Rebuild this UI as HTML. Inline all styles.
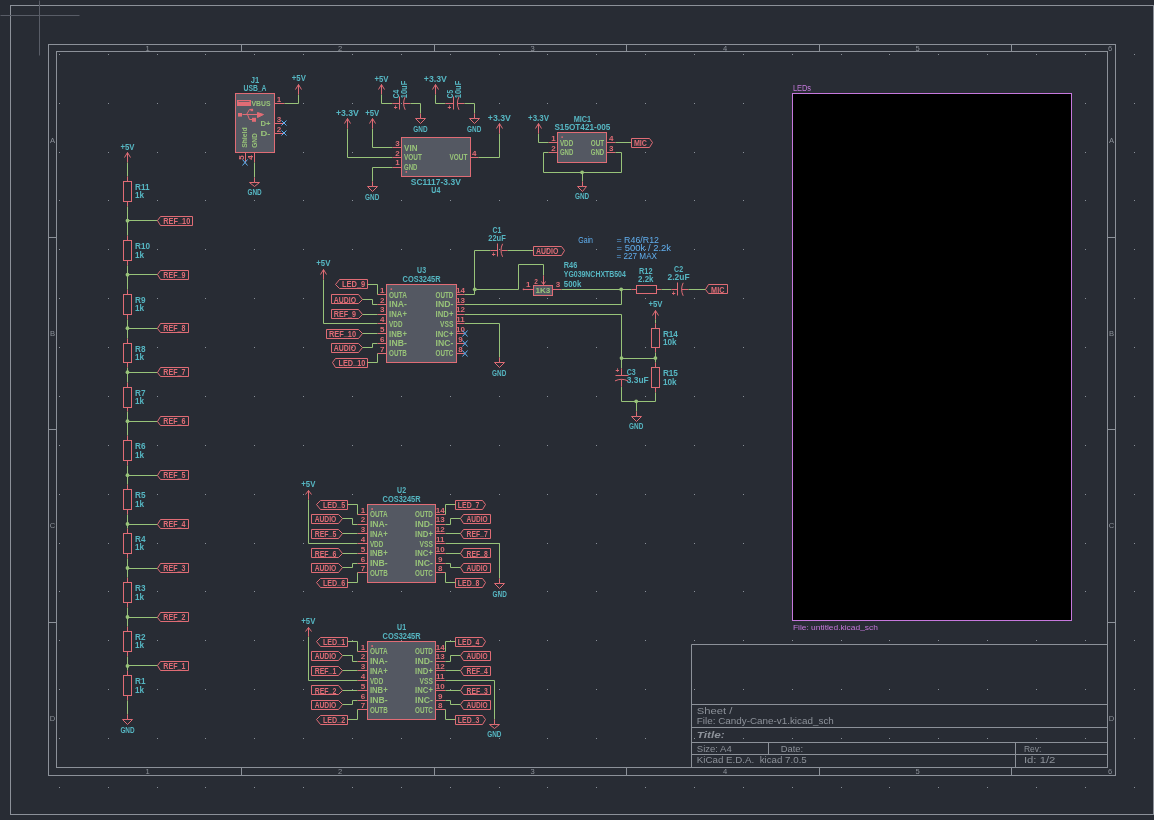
<!DOCTYPE html>
<html><head><meta charset="utf-8"><title>KiCad Schematic</title>
<style>html,body{margin:0;padding:0;background:#282c34;overflow:hidden}</style></head>
<body>
<svg width="1154" height="820" viewBox="0 0 1154 820" style="display:block;will-change:transform">
<rect x="0" y="0" width="1154" height="820" fill="#282c34"/>
<path d="M10 5h1v1h-1zM10 54h1v1h-1zM10 103h1v1h-1zM10 152h1v1h-1zM10 200h1v1h-1zM10 249h1v1h-1zM10 298h1v1h-1zM10 347h1v1h-1zM10 396h1v1h-1zM10 445h1v1h-1zM10 494h1v1h-1zM10 543h1v1h-1zM10 591h1v1h-1zM10 640h1v1h-1zM10 689h1v1h-1zM10 738h1v1h-1zM10 787h1v1h-1zM59 5h1v1h-1zM59 54h1v1h-1zM59 103h1v1h-1zM59 152h1v1h-1zM59 200h1v1h-1zM59 249h1v1h-1zM59 298h1v1h-1zM59 347h1v1h-1zM59 396h1v1h-1zM59 445h1v1h-1zM59 494h1v1h-1zM59 543h1v1h-1zM59 591h1v1h-1zM59 640h1v1h-1zM59 689h1v1h-1zM59 738h1v1h-1zM59 787h1v1h-1zM108 5h1v1h-1zM108 54h1v1h-1zM108 103h1v1h-1zM108 152h1v1h-1zM108 200h1v1h-1zM108 249h1v1h-1zM108 298h1v1h-1zM108 347h1v1h-1zM108 396h1v1h-1zM108 445h1v1h-1zM108 494h1v1h-1zM108 543h1v1h-1zM108 591h1v1h-1zM108 640h1v1h-1zM108 689h1v1h-1zM108 738h1v1h-1zM108 787h1v1h-1zM157 5h1v1h-1zM157 54h1v1h-1zM157 103h1v1h-1zM157 152h1v1h-1zM157 200h1v1h-1zM157 249h1v1h-1zM157 298h1v1h-1zM157 347h1v1h-1zM157 396h1v1h-1zM157 445h1v1h-1zM157 494h1v1h-1zM157 543h1v1h-1zM157 591h1v1h-1zM157 640h1v1h-1zM157 689h1v1h-1zM157 738h1v1h-1zM157 787h1v1h-1zM205 5h1v1h-1zM205 54h1v1h-1zM205 103h1v1h-1zM205 152h1v1h-1zM205 200h1v1h-1zM205 249h1v1h-1zM205 298h1v1h-1zM205 347h1v1h-1zM205 396h1v1h-1zM205 445h1v1h-1zM205 494h1v1h-1zM205 543h1v1h-1zM205 591h1v1h-1zM205 640h1v1h-1zM205 689h1v1h-1zM205 738h1v1h-1zM205 787h1v1h-1zM254 5h1v1h-1zM254 54h1v1h-1zM254 103h1v1h-1zM254 152h1v1h-1zM254 200h1v1h-1zM254 249h1v1h-1zM254 298h1v1h-1zM254 347h1v1h-1zM254 396h1v1h-1zM254 445h1v1h-1zM254 494h1v1h-1zM254 543h1v1h-1zM254 591h1v1h-1zM254 640h1v1h-1zM254 689h1v1h-1zM254 738h1v1h-1zM254 787h1v1h-1zM303 5h1v1h-1zM303 54h1v1h-1zM303 103h1v1h-1zM303 152h1v1h-1zM303 200h1v1h-1zM303 249h1v1h-1zM303 298h1v1h-1zM303 347h1v1h-1zM303 396h1v1h-1zM303 445h1v1h-1zM303 494h1v1h-1zM303 543h1v1h-1zM303 591h1v1h-1zM303 640h1v1h-1zM303 689h1v1h-1zM303 738h1v1h-1zM303 787h1v1h-1zM352 5h1v1h-1zM352 54h1v1h-1zM352 103h1v1h-1zM352 152h1v1h-1zM352 200h1v1h-1zM352 249h1v1h-1zM352 298h1v1h-1zM352 347h1v1h-1zM352 396h1v1h-1zM352 445h1v1h-1zM352 494h1v1h-1zM352 543h1v1h-1zM352 591h1v1h-1zM352 640h1v1h-1zM352 689h1v1h-1zM352 738h1v1h-1zM352 787h1v1h-1zM401 5h1v1h-1zM401 54h1v1h-1zM401 103h1v1h-1zM401 152h1v1h-1zM401 200h1v1h-1zM401 249h1v1h-1zM401 298h1v1h-1zM401 347h1v1h-1zM401 396h1v1h-1zM401 445h1v1h-1zM401 494h1v1h-1zM401 543h1v1h-1zM401 591h1v1h-1zM401 640h1v1h-1zM401 689h1v1h-1zM401 738h1v1h-1zM401 787h1v1h-1zM450 5h1v1h-1zM450 54h1v1h-1zM450 103h1v1h-1zM450 152h1v1h-1zM450 200h1v1h-1zM450 249h1v1h-1zM450 298h1v1h-1zM450 347h1v1h-1zM450 396h1v1h-1zM450 445h1v1h-1zM450 494h1v1h-1zM450 543h1v1h-1zM450 591h1v1h-1zM450 640h1v1h-1zM450 689h1v1h-1zM450 738h1v1h-1zM450 787h1v1h-1zM499 5h1v1h-1zM499 54h1v1h-1zM499 103h1v1h-1zM499 152h1v1h-1zM499 200h1v1h-1zM499 249h1v1h-1zM499 298h1v1h-1zM499 347h1v1h-1zM499 396h1v1h-1zM499 445h1v1h-1zM499 494h1v1h-1zM499 543h1v1h-1zM499 591h1v1h-1zM499 640h1v1h-1zM499 689h1v1h-1zM499 738h1v1h-1zM499 787h1v1h-1zM547 5h1v1h-1zM547 54h1v1h-1zM547 103h1v1h-1zM547 152h1v1h-1zM547 200h1v1h-1zM547 249h1v1h-1zM547 298h1v1h-1zM547 347h1v1h-1zM547 396h1v1h-1zM547 445h1v1h-1zM547 494h1v1h-1zM547 543h1v1h-1zM547 591h1v1h-1zM547 640h1v1h-1zM547 689h1v1h-1zM547 738h1v1h-1zM547 787h1v1h-1zM596 5h1v1h-1zM596 54h1v1h-1zM596 103h1v1h-1zM596 152h1v1h-1zM596 200h1v1h-1zM596 249h1v1h-1zM596 298h1v1h-1zM596 347h1v1h-1zM596 396h1v1h-1zM596 445h1v1h-1zM596 494h1v1h-1zM596 543h1v1h-1zM596 591h1v1h-1zM596 640h1v1h-1zM596 689h1v1h-1zM596 738h1v1h-1zM596 787h1v1h-1zM645 5h1v1h-1zM645 54h1v1h-1zM645 103h1v1h-1zM645 152h1v1h-1zM645 200h1v1h-1zM645 249h1v1h-1zM645 298h1v1h-1zM645 347h1v1h-1zM645 396h1v1h-1zM645 445h1v1h-1zM645 494h1v1h-1zM645 543h1v1h-1zM645 591h1v1h-1zM645 640h1v1h-1zM645 689h1v1h-1zM645 738h1v1h-1zM645 787h1v1h-1zM694 5h1v1h-1zM694 54h1v1h-1zM694 103h1v1h-1zM694 152h1v1h-1zM694 200h1v1h-1zM694 249h1v1h-1zM694 298h1v1h-1zM694 347h1v1h-1zM694 396h1v1h-1zM694 445h1v1h-1zM694 494h1v1h-1zM694 543h1v1h-1zM694 591h1v1h-1zM694 640h1v1h-1zM694 689h1v1h-1zM694 738h1v1h-1zM694 787h1v1h-1zM743 5h1v1h-1zM743 54h1v1h-1zM743 103h1v1h-1zM743 152h1v1h-1zM743 200h1v1h-1zM743 249h1v1h-1zM743 298h1v1h-1zM743 347h1v1h-1zM743 396h1v1h-1zM743 445h1v1h-1zM743 494h1v1h-1zM743 543h1v1h-1zM743 591h1v1h-1zM743 640h1v1h-1zM743 689h1v1h-1zM743 738h1v1h-1zM743 787h1v1h-1zM792 5h1v1h-1zM792 54h1v1h-1zM792 103h1v1h-1zM792 152h1v1h-1zM792 200h1v1h-1zM792 249h1v1h-1zM792 298h1v1h-1zM792 347h1v1h-1zM792 396h1v1h-1zM792 445h1v1h-1zM792 494h1v1h-1zM792 543h1v1h-1zM792 591h1v1h-1zM792 640h1v1h-1zM792 689h1v1h-1zM792 738h1v1h-1zM792 787h1v1h-1zM841 5h1v1h-1zM841 54h1v1h-1zM841 103h1v1h-1zM841 152h1v1h-1zM841 200h1v1h-1zM841 249h1v1h-1zM841 298h1v1h-1zM841 347h1v1h-1zM841 396h1v1h-1zM841 445h1v1h-1zM841 494h1v1h-1zM841 543h1v1h-1zM841 591h1v1h-1zM841 640h1v1h-1zM841 689h1v1h-1zM841 738h1v1h-1zM841 787h1v1h-1zM889 5h1v1h-1zM889 54h1v1h-1zM889 103h1v1h-1zM889 152h1v1h-1zM889 200h1v1h-1zM889 249h1v1h-1zM889 298h1v1h-1zM889 347h1v1h-1zM889 396h1v1h-1zM889 445h1v1h-1zM889 494h1v1h-1zM889 543h1v1h-1zM889 591h1v1h-1zM889 640h1v1h-1zM889 689h1v1h-1zM889 738h1v1h-1zM889 787h1v1h-1zM938 5h1v1h-1zM938 54h1v1h-1zM938 103h1v1h-1zM938 152h1v1h-1zM938 200h1v1h-1zM938 249h1v1h-1zM938 298h1v1h-1zM938 347h1v1h-1zM938 396h1v1h-1zM938 445h1v1h-1zM938 494h1v1h-1zM938 543h1v1h-1zM938 591h1v1h-1zM938 640h1v1h-1zM938 689h1v1h-1zM938 738h1v1h-1zM938 787h1v1h-1zM987 5h1v1h-1zM987 54h1v1h-1zM987 103h1v1h-1zM987 152h1v1h-1zM987 200h1v1h-1zM987 249h1v1h-1zM987 298h1v1h-1zM987 347h1v1h-1zM987 396h1v1h-1zM987 445h1v1h-1zM987 494h1v1h-1zM987 543h1v1h-1zM987 591h1v1h-1zM987 640h1v1h-1zM987 689h1v1h-1zM987 738h1v1h-1zM987 787h1v1h-1zM1036 5h1v1h-1zM1036 54h1v1h-1zM1036 103h1v1h-1zM1036 152h1v1h-1zM1036 200h1v1h-1zM1036 249h1v1h-1zM1036 298h1v1h-1zM1036 347h1v1h-1zM1036 396h1v1h-1zM1036 445h1v1h-1zM1036 494h1v1h-1zM1036 543h1v1h-1zM1036 591h1v1h-1zM1036 640h1v1h-1zM1036 689h1v1h-1zM1036 738h1v1h-1zM1036 787h1v1h-1zM1085 5h1v1h-1zM1085 54h1v1h-1zM1085 103h1v1h-1zM1085 152h1v1h-1zM1085 200h1v1h-1zM1085 249h1v1h-1zM1085 298h1v1h-1zM1085 347h1v1h-1zM1085 396h1v1h-1zM1085 445h1v1h-1zM1085 494h1v1h-1zM1085 543h1v1h-1zM1085 591h1v1h-1zM1085 640h1v1h-1zM1085 689h1v1h-1zM1085 738h1v1h-1zM1085 787h1v1h-1zM1134 5h1v1h-1zM1134 54h1v1h-1zM1134 103h1v1h-1zM1134 152h1v1h-1zM1134 200h1v1h-1zM1134 249h1v1h-1zM1134 298h1v1h-1zM1134 347h1v1h-1zM1134 396h1v1h-1zM1134 445h1v1h-1zM1134 494h1v1h-1zM1134 543h1v1h-1zM1134 591h1v1h-1zM1134 640h1v1h-1zM1134 689h1v1h-1zM1134 738h1v1h-1zM1134 787h1v1h-1z" fill="#8a9099"/>
<rect x="10.50" y="5.50" width="1143.00" height="809.00" stroke="#8c9199" stroke-width="1.0" fill="none"/>
<line x1="39.50" y1="0.50" x2="39.50" y2="55.50" stroke="#595d67" stroke-width="1.0"/>
<line x1="0.50" y1="15.50" x2="79.50" y2="15.50" stroke="#595d67" stroke-width="1.0"/>
<rect x="48.50" y="44.50" width="1067.00" height="731.00" stroke="#8c9199" stroke-width="1.0" fill="none"/>
<rect x="56.50" y="51.50" width="1051.00" height="716.00" stroke="#8c9199" stroke-width="1.0" fill="none"/>
<line x1="241.50" y1="44.50" x2="241.50" y2="51.50" stroke="#8c9199" stroke-width="1.0"/>
<line x1="241.50" y1="767.50" x2="241.50" y2="775.50" stroke="#8c9199" stroke-width="1.0"/>
<line x1="434.50" y1="44.50" x2="434.50" y2="51.50" stroke="#8c9199" stroke-width="1.0"/>
<line x1="434.50" y1="767.50" x2="434.50" y2="775.50" stroke="#8c9199" stroke-width="1.0"/>
<line x1="626.50" y1="44.50" x2="626.50" y2="51.50" stroke="#8c9199" stroke-width="1.0"/>
<line x1="626.50" y1="767.50" x2="626.50" y2="775.50" stroke="#8c9199" stroke-width="1.0"/>
<line x1="819.50" y1="44.50" x2="819.50" y2="51.50" stroke="#8c9199" stroke-width="1.0"/>
<line x1="819.50" y1="767.50" x2="819.50" y2="775.50" stroke="#8c9199" stroke-width="1.0"/>
<line x1="1011.50" y1="44.50" x2="1011.50" y2="51.50" stroke="#8c9199" stroke-width="1.0"/>
<line x1="1011.50" y1="767.50" x2="1011.50" y2="775.50" stroke="#8c9199" stroke-width="1.0"/>
<line x1="48.50" y1="237.50" x2="56.50" y2="237.50" stroke="#8c9199" stroke-width="1.0"/>
<line x1="1107.50" y1="237.50" x2="1115.50" y2="237.50" stroke="#8c9199" stroke-width="1.0"/>
<line x1="48.50" y1="429.50" x2="56.50" y2="429.50" stroke="#8c9199" stroke-width="1.0"/>
<line x1="1107.50" y1="429.50" x2="1115.50" y2="429.50" stroke="#8c9199" stroke-width="1.0"/>
<line x1="48.50" y1="622.50" x2="56.50" y2="622.50" stroke="#8c9199" stroke-width="1.0"/>
<line x1="1107.50" y1="622.50" x2="1115.50" y2="622.50" stroke="#8c9199" stroke-width="1.0"/>
<text x="147.50" y="50.61" fill="#8c9199" font-family="Liberation Sans" font-size="7.6" text-anchor="middle" font-weight="normal" font-style="normal">1</text>
<text x="147.50" y="774.11" fill="#8c9199" font-family="Liberation Sans" font-size="7.6" text-anchor="middle" font-weight="normal" font-style="normal">1</text>
<text x="340.00" y="50.61" fill="#8c9199" font-family="Liberation Sans" font-size="7.6" text-anchor="middle" font-weight="normal" font-style="normal">2</text>
<text x="340.00" y="774.11" fill="#8c9199" font-family="Liberation Sans" font-size="7.6" text-anchor="middle" font-weight="normal" font-style="normal">2</text>
<text x="532.50" y="50.61" fill="#8c9199" font-family="Liberation Sans" font-size="7.6" text-anchor="middle" font-weight="normal" font-style="normal">3</text>
<text x="532.50" y="774.11" fill="#8c9199" font-family="Liberation Sans" font-size="7.6" text-anchor="middle" font-weight="normal" font-style="normal">3</text>
<text x="725.00" y="50.61" fill="#8c9199" font-family="Liberation Sans" font-size="7.6" text-anchor="middle" font-weight="normal" font-style="normal">4</text>
<text x="725.00" y="774.11" fill="#8c9199" font-family="Liberation Sans" font-size="7.6" text-anchor="middle" font-weight="normal" font-style="normal">4</text>
<text x="917.50" y="50.61" fill="#8c9199" font-family="Liberation Sans" font-size="7.6" text-anchor="middle" font-weight="normal" font-style="normal">5</text>
<text x="917.50" y="774.11" fill="#8c9199" font-family="Liberation Sans" font-size="7.6" text-anchor="middle" font-weight="normal" font-style="normal">5</text>
<text x="1110.00" y="50.61" fill="#8c9199" font-family="Liberation Sans" font-size="7.6" text-anchor="middle" font-weight="normal" font-style="normal">6</text>
<text x="1110.00" y="774.11" fill="#8c9199" font-family="Liberation Sans" font-size="7.6" text-anchor="middle" font-weight="normal" font-style="normal">6</text>
<text x="52.50" y="142.61" fill="#8c9199" font-family="Liberation Sans" font-size="7.6" text-anchor="middle" font-weight="normal" font-style="normal">A</text>
<text x="1111.50" y="142.61" fill="#8c9199" font-family="Liberation Sans" font-size="7.6" text-anchor="middle" font-weight="normal" font-style="normal">A</text>
<text x="52.50" y="335.61" fill="#8c9199" font-family="Liberation Sans" font-size="7.6" text-anchor="middle" font-weight="normal" font-style="normal">B</text>
<text x="1111.50" y="335.61" fill="#8c9199" font-family="Liberation Sans" font-size="7.6" text-anchor="middle" font-weight="normal" font-style="normal">B</text>
<text x="52.50" y="528.11" fill="#8c9199" font-family="Liberation Sans" font-size="7.6" text-anchor="middle" font-weight="normal" font-style="normal">C</text>
<text x="1111.50" y="528.11" fill="#8c9199" font-family="Liberation Sans" font-size="7.6" text-anchor="middle" font-weight="normal" font-style="normal">C</text>
<text x="52.50" y="720.61" fill="#8c9199" font-family="Liberation Sans" font-size="7.6" text-anchor="middle" font-weight="normal" font-style="normal">D</text>
<text x="1111.50" y="720.61" fill="#8c9199" font-family="Liberation Sans" font-size="7.6" text-anchor="middle" font-weight="normal" font-style="normal">D</text>
<line x1="691.50" y1="644.50" x2="691.50" y2="767.50" stroke="#8c9199" stroke-width="1.0"/>
<line x1="691.50" y1="644.50" x2="1107.50" y2="644.50" stroke="#8c9199" stroke-width="1.0"/>
<line x1="691.50" y1="704.50" x2="1107.50" y2="704.50" stroke="#8c9199" stroke-width="1.0"/>
<line x1="691.50" y1="727.50" x2="1107.50" y2="727.50" stroke="#8c9199" stroke-width="1.0"/>
<line x1="691.50" y1="742.50" x2="1107.50" y2="742.50" stroke="#8c9199" stroke-width="1.0"/>
<line x1="691.50" y1="754.50" x2="1107.50" y2="754.50" stroke="#8c9199" stroke-width="1.0"/>
<line x1="768.50" y1="742.50" x2="768.50" y2="754.50" stroke="#8c9199" stroke-width="1.0"/>
<line x1="1015.50" y1="742.50" x2="1015.50" y2="767.50" stroke="#8c9199" stroke-width="1.0"/>
<text x="696.80" y="713.53" fill="#8c9199" font-family="Liberation Sans" font-size="9.4" text-anchor="start" font-weight="normal" font-style="normal" textLength="35.60" lengthAdjust="spacingAndGlyphs">Sheet /</text>
<text x="696.80" y="724.03" fill="#8c9199" font-family="Liberation Sans" font-size="9.4" text-anchor="start" font-weight="normal" font-style="normal" textLength="137.00" lengthAdjust="spacingAndGlyphs">File: Candy-Cane-v1.kicad<tspan dy="-0.5">_</tspan><tspan dy="0.5">sch</tspan></text>
<text x="696.80" y="737.73" fill="#8c9199" font-family="Liberation Sans" font-size="9.4" text-anchor="start" font-weight="bold" font-style="italic" textLength="28.00" lengthAdjust="spacingAndGlyphs">Title:</text>
<text x="696.80" y="752.23" fill="#8c9199" font-family="Liberation Sans" font-size="9.4" text-anchor="start" font-weight="normal" font-style="normal" textLength="35.00" lengthAdjust="spacingAndGlyphs">Size: A4</text>
<text x="780.70" y="752.23" fill="#8c9199" font-family="Liberation Sans" font-size="9.4" text-anchor="start" font-weight="normal" font-style="normal" textLength="22.50" lengthAdjust="spacingAndGlyphs">Date:</text>
<text x="696.80" y="763.23" fill="#8c9199" font-family="Liberation Sans" font-size="9.4" text-anchor="start" font-weight="normal" font-style="normal" textLength="110.00" lengthAdjust="spacingAndGlyphs">KiCad E.D.A. &#160;kicad 7.0.5</text>
<text x="1023.90" y="752.23" fill="#8c9199" font-family="Liberation Sans" font-size="9.4" text-anchor="start" font-weight="normal" font-style="normal" textLength="17.50" lengthAdjust="spacingAndGlyphs">Rev:</text>
<text x="1023.90" y="763.23" fill="#8c9199" font-family="Liberation Sans" font-size="9.4" text-anchor="start" font-weight="normal" font-style="normal" textLength="31.50" lengthAdjust="spacingAndGlyphs">Id: 1/2</text>
<rect x="792.50" y="93.50" width="279.00" height="527.00" stroke="#c678dd" stroke-width="1.0" fill="#000000"/>
<text x="792.90" y="90.92" fill="#c678dd" font-family="Liberation Sans" font-size="8.5" text-anchor="start" font-weight="normal" font-style="normal" textLength="18.20" lengthAdjust="spacingAndGlyphs">LEDs</text>
<text x="792.90" y="629.95" fill="#c678dd" font-family="Liberation Sans" font-size="8.0" text-anchor="start" font-weight="normal" font-style="normal" textLength="85.00" lengthAdjust="spacingAndGlyphs">File: untitled.kicad<tspan dy="-0.5">_</tspan><tspan dy="0.5">sch</tspan></text>
<line x1="127.50" y1="162.50" x2="127.50" y2="152.50" stroke="#e06c75" stroke-width="1.0"/>
<polyline points="124.50,157.50 127.50,152.50 130.50,157.50" stroke="#e06c75" stroke-width="1.0" fill="none" stroke-linejoin="miter"/>
<text x="127.50" y="149.64" fill="#56b6c2" font-family="Liberation Sans" font-size="8.2" text-anchor="middle" font-weight="bold" font-style="normal" textLength="14.00" lengthAdjust="spacingAndGlyphs">+5V</text>
<polyline points="127.50,162.50 127.50,176.50" stroke="#98c379" stroke-width="1.0" fill="none" stroke-linejoin="miter"/>
<rect x="123.50" y="181.50" width="8.00" height="20.00" stroke="#e06c75" stroke-width="1.0" fill="none"/>
<line x1="127.50" y1="176.50" x2="127.50" y2="181.50" stroke="#e06c75" stroke-width="1.0"/>
<line x1="127.50" y1="201.50" x2="127.50" y2="206.50" stroke="#e06c75" stroke-width="1.0"/>
<text x="135.00" y="189.92" fill="#56b6c2" font-family="Liberation Sans" font-size="8.2" text-anchor="start" font-weight="bold" font-style="normal">R11</text>
<text x="135.00" y="198.32" fill="#56b6c2" font-family="Liberation Sans" font-size="8.2" text-anchor="start" font-weight="bold" font-style="normal">1k</text>
<rect x="123.50" y="240.50" width="8.00" height="20.00" stroke="#e06c75" stroke-width="1.0" fill="none"/>
<line x1="127.50" y1="235.50" x2="127.50" y2="240.50" stroke="#e06c75" stroke-width="1.0"/>
<line x1="127.50" y1="260.50" x2="127.50" y2="265.50" stroke="#e06c75" stroke-width="1.0"/>
<text x="135.00" y="249.12" fill="#56b6c2" font-family="Liberation Sans" font-size="8.2" text-anchor="start" font-weight="bold" font-style="normal">R10</text>
<text x="135.00" y="257.52" fill="#56b6c2" font-family="Liberation Sans" font-size="8.2" text-anchor="start" font-weight="bold" font-style="normal">1k</text>
<rect x="123.50" y="294.50" width="8.00" height="20.00" stroke="#e06c75" stroke-width="1.0" fill="none"/>
<line x1="127.50" y1="289.50" x2="127.50" y2="294.50" stroke="#e06c75" stroke-width="1.0"/>
<line x1="127.50" y1="314.50" x2="127.50" y2="319.50" stroke="#e06c75" stroke-width="1.0"/>
<text x="135.00" y="303.02" fill="#56b6c2" font-family="Liberation Sans" font-size="8.2" text-anchor="start" font-weight="bold" font-style="normal">R9</text>
<text x="135.00" y="311.42" fill="#56b6c2" font-family="Liberation Sans" font-size="8.2" text-anchor="start" font-weight="bold" font-style="normal">1k</text>
<rect x="123.50" y="343.50" width="8.00" height="19.00" stroke="#e06c75" stroke-width="1.0" fill="none"/>
<line x1="127.50" y1="338.50" x2="127.50" y2="343.50" stroke="#e06c75" stroke-width="1.0"/>
<line x1="127.50" y1="362.50" x2="127.50" y2="367.50" stroke="#e06c75" stroke-width="1.0"/>
<text x="135.00" y="351.72" fill="#56b6c2" font-family="Liberation Sans" font-size="8.2" text-anchor="start" font-weight="bold" font-style="normal">R8</text>
<text x="135.00" y="360.12" fill="#56b6c2" font-family="Liberation Sans" font-size="8.2" text-anchor="start" font-weight="bold" font-style="normal">1k</text>
<rect x="123.50" y="387.50" width="8.00" height="20.00" stroke="#e06c75" stroke-width="1.0" fill="none"/>
<line x1="127.50" y1="382.50" x2="127.50" y2="387.50" stroke="#e06c75" stroke-width="1.0"/>
<line x1="127.50" y1="407.50" x2="127.50" y2="411.50" stroke="#e06c75" stroke-width="1.0"/>
<text x="135.00" y="395.82" fill="#56b6c2" font-family="Liberation Sans" font-size="8.2" text-anchor="start" font-weight="bold" font-style="normal">R7</text>
<text x="135.00" y="404.22" fill="#56b6c2" font-family="Liberation Sans" font-size="8.2" text-anchor="start" font-weight="bold" font-style="normal">1k</text>
<rect x="123.50" y="440.50" width="8.00" height="20.00" stroke="#e06c75" stroke-width="1.0" fill="none"/>
<line x1="127.50" y1="435.50" x2="127.50" y2="440.50" stroke="#e06c75" stroke-width="1.0"/>
<line x1="127.50" y1="460.50" x2="127.50" y2="465.50" stroke="#e06c75" stroke-width="1.0"/>
<text x="135.00" y="449.12" fill="#56b6c2" font-family="Liberation Sans" font-size="8.2" text-anchor="start" font-weight="bold" font-style="normal">R6</text>
<text x="135.00" y="457.52" fill="#56b6c2" font-family="Liberation Sans" font-size="8.2" text-anchor="start" font-weight="bold" font-style="normal">1k</text>
<rect x="123.50" y="489.50" width="8.00" height="20.00" stroke="#e06c75" stroke-width="1.0" fill="none"/>
<line x1="127.50" y1="484.50" x2="127.50" y2="489.50" stroke="#e06c75" stroke-width="1.0"/>
<line x1="127.50" y1="509.50" x2="127.50" y2="514.50" stroke="#e06c75" stroke-width="1.0"/>
<text x="135.00" y="498.22" fill="#56b6c2" font-family="Liberation Sans" font-size="8.2" text-anchor="start" font-weight="bold" font-style="normal">R5</text>
<text x="135.00" y="506.62" fill="#56b6c2" font-family="Liberation Sans" font-size="8.2" text-anchor="start" font-weight="bold" font-style="normal">1k</text>
<rect x="123.50" y="533.50" width="8.00" height="20.00" stroke="#e06c75" stroke-width="1.0" fill="none"/>
<line x1="127.50" y1="528.50" x2="127.50" y2="533.50" stroke="#e06c75" stroke-width="1.0"/>
<line x1="127.50" y1="553.50" x2="127.50" y2="558.50" stroke="#e06c75" stroke-width="1.0"/>
<text x="135.00" y="542.02" fill="#56b6c2" font-family="Liberation Sans" font-size="8.2" text-anchor="start" font-weight="bold" font-style="normal">R4</text>
<text x="135.00" y="550.42" fill="#56b6c2" font-family="Liberation Sans" font-size="8.2" text-anchor="start" font-weight="bold" font-style="normal">1k</text>
<rect x="123.50" y="582.50" width="8.00" height="20.00" stroke="#e06c75" stroke-width="1.0" fill="none"/>
<line x1="127.50" y1="577.50" x2="127.50" y2="582.50" stroke="#e06c75" stroke-width="1.0"/>
<line x1="127.50" y1="602.50" x2="127.50" y2="607.50" stroke="#e06c75" stroke-width="1.0"/>
<text x="135.00" y="591.12" fill="#56b6c2" font-family="Liberation Sans" font-size="8.2" text-anchor="start" font-weight="bold" font-style="normal">R3</text>
<text x="135.00" y="599.52" fill="#56b6c2" font-family="Liberation Sans" font-size="8.2" text-anchor="start" font-weight="bold" font-style="normal">1k</text>
<rect x="123.50" y="631.50" width="8.00" height="20.00" stroke="#e06c75" stroke-width="1.0" fill="none"/>
<line x1="127.50" y1="626.50" x2="127.50" y2="631.50" stroke="#e06c75" stroke-width="1.0"/>
<line x1="127.50" y1="651.50" x2="127.50" y2="656.50" stroke="#e06c75" stroke-width="1.0"/>
<text x="135.00" y="639.92" fill="#56b6c2" font-family="Liberation Sans" font-size="8.2" text-anchor="start" font-weight="bold" font-style="normal">R2</text>
<text x="135.00" y="648.32" fill="#56b6c2" font-family="Liberation Sans" font-size="8.2" text-anchor="start" font-weight="bold" font-style="normal">1k</text>
<rect x="123.50" y="675.50" width="8.00" height="20.00" stroke="#e06c75" stroke-width="1.0" fill="none"/>
<line x1="127.50" y1="670.50" x2="127.50" y2="675.50" stroke="#e06c75" stroke-width="1.0"/>
<line x1="127.50" y1="695.50" x2="127.50" y2="700.50" stroke="#e06c75" stroke-width="1.0"/>
<text x="135.00" y="684.12" fill="#56b6c2" font-family="Liberation Sans" font-size="8.2" text-anchor="start" font-weight="bold" font-style="normal">R1</text>
<text x="135.00" y="692.52" fill="#56b6c2" font-family="Liberation Sans" font-size="8.2" text-anchor="start" font-weight="bold" font-style="normal">1k</text>
<polyline points="127.50,206.50 127.50,235.50" stroke="#98c379" stroke-width="1.0" fill="none" stroke-linejoin="miter"/>
<polyline points="127.50,220.50 157.50,220.50" stroke="#98c379" stroke-width="1.0" fill="none" stroke-linejoin="miter"/>
<circle cx="127.50" cy="220.70" r="1.9" fill="#98c379"/>
<polygon points="157.50,220.50 160.50,216.50 192.50,216.50 192.50,225.50 160.50,225.50 157.50,220.50" stroke="#e06c75" stroke-width="1.0" fill="none" stroke-linejoin="miter"/>
<text x="163.30" y="223.82" fill="#e06c75" font-family="Liberation Sans" font-size="8.2" text-anchor="start" font-weight="bold" font-style="normal" textLength="27.00" lengthAdjust="spacingAndGlyphs">REF<tspan dy="-0.5">_</tspan><tspan dy="0.5">10</tspan></text>
<polyline points="127.50,265.50 127.50,289.50" stroke="#98c379" stroke-width="1.0" fill="none" stroke-linejoin="miter"/>
<polyline points="127.50,274.50 157.50,274.50" stroke="#98c379" stroke-width="1.0" fill="none" stroke-linejoin="miter"/>
<circle cx="127.50" cy="274.70" r="1.9" fill="#98c379"/>
<polygon points="157.50,274.50 160.50,270.50 188.50,270.50 188.50,279.50 160.50,279.50 157.50,274.50" stroke="#e06c75" stroke-width="1.0" fill="none" stroke-linejoin="miter"/>
<text x="163.30" y="277.82" fill="#e06c75" font-family="Liberation Sans" font-size="8.2" text-anchor="start" font-weight="bold" font-style="normal" textLength="22.10" lengthAdjust="spacingAndGlyphs">REF<tspan dy="-0.5">_</tspan><tspan dy="0.5">9</tspan></text>
<polyline points="127.50,319.50 127.50,338.50" stroke="#98c379" stroke-width="1.0" fill="none" stroke-linejoin="miter"/>
<polyline points="127.50,328.50 157.50,328.50" stroke="#98c379" stroke-width="1.0" fill="none" stroke-linejoin="miter"/>
<circle cx="127.50" cy="328.20" r="1.9" fill="#98c379"/>
<polygon points="157.50,328.50 160.50,323.50 188.50,323.50 188.50,332.50 160.50,332.50 157.50,328.50" stroke="#e06c75" stroke-width="1.0" fill="none" stroke-linejoin="miter"/>
<text x="163.30" y="331.32" fill="#e06c75" font-family="Liberation Sans" font-size="8.2" text-anchor="start" font-weight="bold" font-style="normal" textLength="22.10" lengthAdjust="spacingAndGlyphs">REF<tspan dy="-0.5">_</tspan><tspan dy="0.5">8</tspan></text>
<polyline points="127.50,367.50 127.50,382.50" stroke="#98c379" stroke-width="1.0" fill="none" stroke-linejoin="miter"/>
<polyline points="127.50,372.50 157.50,372.50" stroke="#98c379" stroke-width="1.0" fill="none" stroke-linejoin="miter"/>
<circle cx="127.50" cy="372.20" r="1.9" fill="#98c379"/>
<polygon points="157.50,372.50 160.50,367.50 188.50,367.50 188.50,376.50 160.50,376.50 157.50,372.50" stroke="#e06c75" stroke-width="1.0" fill="none" stroke-linejoin="miter"/>
<text x="163.30" y="375.32" fill="#e06c75" font-family="Liberation Sans" font-size="8.2" text-anchor="start" font-weight="bold" font-style="normal" textLength="22.10" lengthAdjust="spacingAndGlyphs">REF<tspan dy="-0.5">_</tspan><tspan dy="0.5">7</tspan></text>
<polyline points="127.50,411.50 127.50,435.50" stroke="#98c379" stroke-width="1.0" fill="none" stroke-linejoin="miter"/>
<polyline points="127.50,421.50 157.50,421.50" stroke="#98c379" stroke-width="1.0" fill="none" stroke-linejoin="miter"/>
<circle cx="127.50" cy="421.20" r="1.9" fill="#98c379"/>
<polygon points="157.50,421.50 160.50,416.50 188.50,416.50 188.50,425.50 160.50,425.50 157.50,421.50" stroke="#e06c75" stroke-width="1.0" fill="none" stroke-linejoin="miter"/>
<text x="163.30" y="424.32" fill="#e06c75" font-family="Liberation Sans" font-size="8.2" text-anchor="start" font-weight="bold" font-style="normal" textLength="22.10" lengthAdjust="spacingAndGlyphs">REF<tspan dy="-0.5">_</tspan><tspan dy="0.5">6</tspan></text>
<polyline points="127.50,465.50 127.50,484.50" stroke="#98c379" stroke-width="1.0" fill="none" stroke-linejoin="miter"/>
<polyline points="127.50,475.50 157.50,475.50" stroke="#98c379" stroke-width="1.0" fill="none" stroke-linejoin="miter"/>
<circle cx="127.50" cy="475.20" r="1.9" fill="#98c379"/>
<polygon points="157.50,475.50 160.50,470.50 188.50,470.50 188.50,479.50 160.50,479.50 157.50,475.50" stroke="#e06c75" stroke-width="1.0" fill="none" stroke-linejoin="miter"/>
<text x="163.30" y="478.32" fill="#e06c75" font-family="Liberation Sans" font-size="8.2" text-anchor="start" font-weight="bold" font-style="normal" textLength="22.10" lengthAdjust="spacingAndGlyphs">REF<tspan dy="-0.5">_</tspan><tspan dy="0.5">5</tspan></text>
<polyline points="127.50,514.50 127.50,528.50" stroke="#98c379" stroke-width="1.0" fill="none" stroke-linejoin="miter"/>
<polyline points="127.50,524.50 157.50,524.50" stroke="#98c379" stroke-width="1.0" fill="none" stroke-linejoin="miter"/>
<circle cx="127.50" cy="524.00" r="1.9" fill="#98c379"/>
<polygon points="157.50,524.50 160.50,519.50 188.50,519.50 188.50,528.50 160.50,528.50 157.50,524.50" stroke="#e06c75" stroke-width="1.0" fill="none" stroke-linejoin="miter"/>
<text x="163.30" y="527.12" fill="#e06c75" font-family="Liberation Sans" font-size="8.2" text-anchor="start" font-weight="bold" font-style="normal" textLength="22.10" lengthAdjust="spacingAndGlyphs">REF<tspan dy="-0.5">_</tspan><tspan dy="0.5">4</tspan></text>
<polyline points="127.50,558.50 127.50,577.50" stroke="#98c379" stroke-width="1.0" fill="none" stroke-linejoin="miter"/>
<polyline points="127.50,568.50 157.50,568.50" stroke="#98c379" stroke-width="1.0" fill="none" stroke-linejoin="miter"/>
<circle cx="127.50" cy="568.00" r="1.9" fill="#98c379"/>
<polygon points="157.50,568.50 160.50,563.50 188.50,563.50 188.50,572.50 160.50,572.50 157.50,568.50" stroke="#e06c75" stroke-width="1.0" fill="none" stroke-linejoin="miter"/>
<text x="163.30" y="571.12" fill="#e06c75" font-family="Liberation Sans" font-size="8.2" text-anchor="start" font-weight="bold" font-style="normal" textLength="22.10" lengthAdjust="spacingAndGlyphs">REF<tspan dy="-0.5">_</tspan><tspan dy="0.5">3</tspan></text>
<polyline points="127.50,607.50 127.50,626.50" stroke="#98c379" stroke-width="1.0" fill="none" stroke-linejoin="miter"/>
<polyline points="127.50,617.50 157.50,617.50" stroke="#98c379" stroke-width="1.0" fill="none" stroke-linejoin="miter"/>
<circle cx="127.50" cy="617.00" r="1.9" fill="#98c379"/>
<polygon points="157.50,617.50 160.50,612.50 188.50,612.50 188.50,621.50 160.50,621.50 157.50,617.50" stroke="#e06c75" stroke-width="1.0" fill="none" stroke-linejoin="miter"/>
<text x="163.30" y="620.12" fill="#e06c75" font-family="Liberation Sans" font-size="8.2" text-anchor="start" font-weight="bold" font-style="normal" textLength="22.10" lengthAdjust="spacingAndGlyphs">REF<tspan dy="-0.5">_</tspan><tspan dy="0.5">2</tspan></text>
<polyline points="127.50,656.50 127.50,670.50" stroke="#98c379" stroke-width="1.0" fill="none" stroke-linejoin="miter"/>
<polyline points="127.50,665.50 157.50,665.50" stroke="#98c379" stroke-width="1.0" fill="none" stroke-linejoin="miter"/>
<circle cx="127.50" cy="665.90" r="1.9" fill="#98c379"/>
<polygon points="157.50,665.50 160.50,661.50 188.50,661.50 188.50,670.50 160.50,670.50 157.50,665.50" stroke="#e06c75" stroke-width="1.0" fill="none" stroke-linejoin="miter"/>
<text x="163.30" y="669.02" fill="#e06c75" font-family="Liberation Sans" font-size="8.2" text-anchor="start" font-weight="bold" font-style="normal" textLength="22.10" lengthAdjust="spacingAndGlyphs">REF<tspan dy="-0.5">_</tspan><tspan dy="0.5">1</tspan></text>
<polyline points="127.50,700.50 127.50,714.50" stroke="#98c379" stroke-width="1.0" fill="none" stroke-linejoin="miter"/>
<line x1="127.50" y1="714.50" x2="127.50" y2="719.50" stroke="#e06c75" stroke-width="1.0"/>
<polyline points="127.50,719.50 132.50,719.50 127.50,724.50 122.50,719.50 127.50,719.50" stroke="#e06c75" stroke-width="1.0" fill="none" stroke-linejoin="miter"/>
<text x="127.50" y="732.52" fill="#56b6c2" font-family="Liberation Sans" font-size="8.2" text-anchor="middle" font-weight="bold" font-style="normal" textLength="14.20" lengthAdjust="spacingAndGlyphs">GND</text>
<rect x="235.50" y="93.50" width="39.00" height="59.00" stroke="#e06c75" stroke-width="1.0" fill="#545862"/>
<rect x="237.50" y="100.50" width="13.00" height="5.00" stroke="#e06c75" stroke-width="1.0" fill="#e06c75"/>
<line x1="238.50" y1="101.50" x2="249.50" y2="101.50" stroke="#545862" stroke-width="0.8"/>
<rect x="238" y="113" width="4" height="3.6" fill="#e06c75"/>
<line x1="242.50" y1="114.50" x2="259.50" y2="114.50" stroke="#e06c75" stroke-width="1.0"/>
<polygon points="257.50,112.50 263.50,114.50 257.50,117.50" stroke="#e06c75" stroke-width="1.0" fill="#e06c75" stroke-linejoin="miter"/>
<polyline points="246.50,114.50 249.50,109.50 252.50,109.50" stroke="#e06c75" stroke-width="1.0" fill="none" stroke-linejoin="miter"/>
<rect x="250.5" y="108.8" width="2.6" height="2.4" fill="#e06c75"/>
<polyline points="247.50,114.50 249.50,119.50 252.50,119.50" stroke="#e06c75" stroke-width="1.0" fill="none" stroke-linejoin="miter"/>
<rect x="252" y="117.8" width="4" height="4" fill="#e06c75"/>
<text x="270.50" y="106.25" fill="#98c379" font-family="Liberation Sans" font-size="8.0" text-anchor="end" font-weight="bold" font-style="normal" textLength="19.00" lengthAdjust="spacingAndGlyphs">VBUS</text>
<text x="270.50" y="125.75" fill="#98c379" font-family="Liberation Sans" font-size="8.0" text-anchor="end" font-weight="bold" font-style="normal" textLength="10.00" lengthAdjust="spacingAndGlyphs">D+</text>
<text x="270.50" y="135.75" fill="#98c379" font-family="Liberation Sans" font-size="8.0" text-anchor="end" font-weight="bold" font-style="normal" textLength="10.00" lengthAdjust="spacingAndGlyphs">D-</text>
<text x="244.70" y="140.35" fill="#98c379" font-family="Liberation Sans" font-size="8.0" text-anchor="middle" font-weight="bold" font-style="normal" textLength="20.50" lengthAdjust="spacingAndGlyphs" transform="rotate(-90 244.70 137.60)">Shield</text>
<text x="254.60" y="143.35" fill="#98c379" font-family="Liberation Sans" font-size="8.0" text-anchor="middle" font-weight="bold" font-style="normal" textLength="14.50" lengthAdjust="spacingAndGlyphs" transform="rotate(-90 254.60 140.60)">GND</text>
<line x1="274.50" y1="103.50" x2="284.50" y2="103.50" stroke="#e06c75" stroke-width="1.0"/>
<text x="279.00" y="102.05" fill="#e06c75" font-family="Liberation Sans" font-size="8.0" text-anchor="middle" font-weight="bold" font-style="normal">1</text>
<polyline points="284.50,103.50 298.50,103.50 298.50,94.50" stroke="#98c379" stroke-width="1.0" fill="none" stroke-linejoin="miter"/>
<line x1="298.50" y1="94.50" x2="298.50" y2="84.50" stroke="#e06c75" stroke-width="1.0"/>
<polyline points="295.50,89.50 298.50,84.50 301.50,89.50" stroke="#e06c75" stroke-width="1.0" fill="none" stroke-linejoin="miter"/>
<text x="298.80" y="81.44" fill="#56b6c2" font-family="Liberation Sans" font-size="8.2" text-anchor="middle" font-weight="bold" font-style="normal" textLength="14.00" lengthAdjust="spacingAndGlyphs">+5V</text>
<line x1="274.50" y1="123.50" x2="284.50" y2="123.50" stroke="#e06c75" stroke-width="1.0"/>
<text x="279.00" y="122.05" fill="#e06c75" font-family="Liberation Sans" font-size="8.0" text-anchor="middle" font-weight="bold" font-style="normal">3</text>
<line x1="281.50" y1="120.50" x2="286.50" y2="125.50" stroke="#61afef" stroke-width="1.0"/>
<line x1="281.50" y1="125.50" x2="286.50" y2="120.50" stroke="#61afef" stroke-width="1.0"/>
<line x1="274.50" y1="133.50" x2="284.50" y2="133.50" stroke="#e06c75" stroke-width="1.0"/>
<text x="279.00" y="132.05" fill="#e06c75" font-family="Liberation Sans" font-size="8.0" text-anchor="middle" font-weight="bold" font-style="normal">2</text>
<line x1="281.50" y1="130.50" x2="286.50" y2="135.50" stroke="#61afef" stroke-width="1.0"/>
<line x1="281.50" y1="135.50" x2="286.50" y2="130.50" stroke="#61afef" stroke-width="1.0"/>
<line x1="245.50" y1="152.50" x2="245.50" y2="162.50" stroke="#e06c75" stroke-width="1.0"/>
<line x1="242.50" y1="159.50" x2="247.50" y2="165.50" stroke="#61afef" stroke-width="1.0"/>
<line x1="242.50" y1="165.50" x2="247.50" y2="159.50" stroke="#61afef" stroke-width="1.0"/>
<text x="241.20" y="160.15" fill="#e06c75" font-family="Liberation Sans" font-size="8.0" text-anchor="middle" font-weight="bold" font-style="normal" transform="rotate(-90 241.20 157.40)">5</text>
<line x1="254.50" y1="152.50" x2="254.50" y2="162.50" stroke="#e06c75" stroke-width="1.0"/>
<text x="250.70" y="160.15" fill="#e06c75" font-family="Liberation Sans" font-size="8.0" text-anchor="middle" font-weight="bold" font-style="normal" transform="rotate(-90 250.70 157.40)">4</text>
<polyline points="254.50,162.50 254.50,177.50" stroke="#98c379" stroke-width="1.0" fill="none" stroke-linejoin="miter"/>
<line x1="254.50" y1="177.50" x2="254.50" y2="182.50" stroke="#e06c75" stroke-width="1.0"/>
<polyline points="254.50,182.50 259.50,182.50 254.50,186.50 249.50,182.50 254.50,182.50" stroke="#e06c75" stroke-width="1.0" fill="none" stroke-linejoin="miter"/>
<text x="254.60" y="195.12" fill="#56b6c2" font-family="Liberation Sans" font-size="8.2" text-anchor="middle" font-weight="bold" font-style="normal" textLength="14.20" lengthAdjust="spacingAndGlyphs">GND</text>
<text x="255.00" y="83.32" fill="#56b6c2" font-family="Liberation Sans" font-size="8.2" text-anchor="middle" font-weight="bold" font-style="normal" textLength="8.50" lengthAdjust="spacingAndGlyphs">J1</text>
<text x="255.00" y="91.02" fill="#56b6c2" font-family="Liberation Sans" font-size="8.2" text-anchor="middle" font-weight="bold" font-style="normal" textLength="23.00" lengthAdjust="spacingAndGlyphs">USB<tspan dy="-0.5">_</tspan><tspan dy="0.5">A</tspan></text>
<rect x="401.50" y="137.50" width="69.00" height="39.00" stroke="#e06c75" stroke-width="1.0" fill="#545862"/>
<line x1="392.50" y1="147.50" x2="401.50" y2="147.50" stroke="#e06c75" stroke-width="1.0"/>
<text x="404.10" y="150.53" fill="#98c379" font-family="Liberation Sans" font-size="8.8" text-anchor="start" font-weight="bold" font-style="normal" textLength="13.35" lengthAdjust="spacingAndGlyphs">VIN</text>
<text x="397.40" y="145.85" fill="#e06c75" font-family="Liberation Sans" font-size="8.0" text-anchor="middle" font-weight="bold" font-style="normal">3</text>
<line x1="392.50" y1="157.50" x2="401.50" y2="157.50" stroke="#e06c75" stroke-width="1.0"/>
<text x="404.10" y="160.33" fill="#98c379" font-family="Liberation Sans" font-size="8.8" text-anchor="start" font-weight="bold" font-style="normal" textLength="17.80" lengthAdjust="spacingAndGlyphs">VOUT</text>
<text x="397.40" y="155.65" fill="#e06c75" font-family="Liberation Sans" font-size="8.0" text-anchor="middle" font-weight="bold" font-style="normal">2</text>
<line x1="392.50" y1="167.50" x2="401.50" y2="167.50" stroke="#e06c75" stroke-width="1.0"/>
<text x="404.10" y="170.13" fill="#98c379" font-family="Liberation Sans" font-size="8.8" text-anchor="start" font-weight="bold" font-style="normal" textLength="13.35" lengthAdjust="spacingAndGlyphs">GND</text>
<text x="397.40" y="165.45" fill="#e06c75" font-family="Liberation Sans" font-size="8.0" text-anchor="middle" font-weight="bold" font-style="normal">1</text>
<line x1="470.50" y1="157.50" x2="478.50" y2="157.50" stroke="#e06c75" stroke-width="1.0"/>
<text x="467.40" y="160.33" fill="#98c379" font-family="Liberation Sans" font-size="8.8" text-anchor="end" font-weight="bold" font-style="normal" textLength="17.80" lengthAdjust="spacingAndGlyphs">VOUT</text>
<text x="474.25" y="155.65" fill="#e06c75" font-family="Liberation Sans" font-size="8.0" text-anchor="middle" font-weight="bold" font-style="normal">4</text>
<circle cx="406.30" cy="171.90" r="0.9" fill="#e06c75"/>
<polyline points="392.50,147.50 372.50,147.50 372.50,128.50" stroke="#98c379" stroke-width="1.0" fill="none" stroke-linejoin="miter"/>
<line x1="372.50" y1="128.50" x2="372.50" y2="118.50" stroke="#e06c75" stroke-width="1.0"/>
<polyline points="369.50,123.50 372.50,118.50 375.50,123.50" stroke="#e06c75" stroke-width="1.0" fill="none" stroke-linejoin="miter"/>
<text x="372.20" y="116.04" fill="#56b6c2" font-family="Liberation Sans" font-size="8.2" text-anchor="middle" font-weight="bold" font-style="normal" textLength="14.00" lengthAdjust="spacingAndGlyphs">+5V</text>
<polyline points="392.50,157.50 347.50,157.50 347.50,128.50" stroke="#98c379" stroke-width="1.0" fill="none" stroke-linejoin="miter"/>
<line x1="347.50" y1="128.50" x2="347.50" y2="118.50" stroke="#e06c75" stroke-width="1.0"/>
<polyline points="344.50,123.50 347.50,118.50 350.50,123.50" stroke="#e06c75" stroke-width="1.0" fill="none" stroke-linejoin="miter"/>
<text x="347.40" y="116.04" fill="#56b6c2" font-family="Liberation Sans" font-size="8.2" text-anchor="middle" font-weight="bold" font-style="normal" textLength="23.00" lengthAdjust="spacingAndGlyphs">+3.3V</text>
<polyline points="392.50,167.50 372.50,167.50 372.50,181.50" stroke="#98c379" stroke-width="1.0" fill="none" stroke-linejoin="miter"/>
<line x1="372.50" y1="181.50" x2="372.50" y2="186.50" stroke="#e06c75" stroke-width="1.0"/>
<polyline points="372.50,186.50 377.50,186.50 372.50,191.50 367.50,186.50 372.50,186.50" stroke="#e06c75" stroke-width="1.0" fill="none" stroke-linejoin="miter"/>
<text x="372.20" y="199.52" fill="#56b6c2" font-family="Liberation Sans" font-size="8.2" text-anchor="middle" font-weight="bold" font-style="normal" textLength="14.20" lengthAdjust="spacingAndGlyphs">GND</text>
<polyline points="478.50,157.50 499.50,157.50 499.50,133.50" stroke="#98c379" stroke-width="1.0" fill="none" stroke-linejoin="miter"/>
<line x1="499.50" y1="133.50" x2="499.50" y2="123.50" stroke="#e06c75" stroke-width="1.0"/>
<polyline points="496.50,128.50 499.50,123.50 502.50,128.50" stroke="#e06c75" stroke-width="1.0" fill="none" stroke-linejoin="miter"/>
<text x="499.30" y="121.14" fill="#56b6c2" font-family="Liberation Sans" font-size="8.2" text-anchor="middle" font-weight="bold" font-style="normal" textLength="23.00" lengthAdjust="spacingAndGlyphs">+3.3V</text>
<text x="435.80" y="185.12" fill="#56b6c2" font-family="Liberation Sans" font-size="8.2" text-anchor="middle" font-weight="bold" font-style="normal" textLength="50.00" lengthAdjust="spacingAndGlyphs">SC1117-3.3V</text>
<text x="435.80" y="193.42" fill="#56b6c2" font-family="Liberation Sans" font-size="8.2" text-anchor="middle" font-weight="bold" font-style="normal" textLength="9.00" lengthAdjust="spacingAndGlyphs">U4</text>
<line x1="381.50" y1="94.50" x2="381.50" y2="84.50" stroke="#e06c75" stroke-width="1.0"/>
<polyline points="378.50,89.50 381.50,84.50 384.50,89.50" stroke="#e06c75" stroke-width="1.0" fill="none" stroke-linejoin="miter"/>
<text x="381.50" y="81.54" fill="#56b6c2" font-family="Liberation Sans" font-size="8.2" text-anchor="middle" font-weight="bold" font-style="normal" textLength="14.00" lengthAdjust="spacingAndGlyphs">+5V</text>
<polyline points="381.50,94.50 381.50,103.50 392.50,103.50" stroke="#98c379" stroke-width="1.0" fill="none" stroke-linejoin="miter"/>
<line x1="392.50" y1="103.50" x2="399.50" y2="103.50" stroke="#e06c75" stroke-width="1.0"/>
<line x1="399.50" y1="96.50" x2="399.50" y2="109.50" stroke="#e06c75" stroke-width="1.0"/>
<path d="M405.20,96.80 Q402.00,103.30 405.20,109.80" stroke="#e06c75" stroke-width="1.0" fill="none"/>
<line x1="403.50" y1="103.50" x2="410.50" y2="103.50" stroke="#e06c75" stroke-width="1.0"/>
<text x="395.60" y="109.74" fill="#e06c75" font-family="Liberation Sans" font-size="6.5" text-anchor="middle" font-weight="bold" font-style="normal">+</text>
<polyline points="410.50,103.50 420.50,103.50 420.50,113.50" stroke="#98c379" stroke-width="1.0" fill="none" stroke-linejoin="miter"/>
<line x1="420.50" y1="113.50" x2="420.50" y2="118.50" stroke="#e06c75" stroke-width="1.0"/>
<polyline points="420.50,118.50 425.50,118.50 420.50,123.50 415.50,118.50 420.50,118.50" stroke="#e06c75" stroke-width="1.0" fill="none" stroke-linejoin="miter"/>
<text x="420.40" y="131.82" fill="#56b6c2" font-family="Liberation Sans" font-size="8.2" text-anchor="middle" font-weight="bold" font-style="normal" textLength="14.20" lengthAdjust="spacingAndGlyphs">GND</text>
<text x="396.00" y="96.82" fill="#56b6c2" font-family="Liberation Sans" font-size="8.2" text-anchor="middle" font-weight="bold" font-style="normal" textLength="8.50" lengthAdjust="spacingAndGlyphs" transform="rotate(-90 396.00 94.00)">C4</text>
<text x="404.30" y="92.32" fill="#56b6c2" font-family="Liberation Sans" font-size="8.2" text-anchor="middle" font-weight="bold" font-style="normal" textLength="17.50" lengthAdjust="spacingAndGlyphs" transform="rotate(-90 404.30 89.50)">10uF</text>
<line x1="435.50" y1="94.50" x2="435.50" y2="84.50" stroke="#e06c75" stroke-width="1.0"/>
<polyline points="432.50,89.50 435.50,84.50 438.50,89.50" stroke="#e06c75" stroke-width="1.0" fill="none" stroke-linejoin="miter"/>
<text x="435.30" y="81.54" fill="#56b6c2" font-family="Liberation Sans" font-size="8.2" text-anchor="middle" font-weight="bold" font-style="normal" textLength="23.00" lengthAdjust="spacingAndGlyphs">+3.3V</text>
<polyline points="435.50,94.50 435.50,103.50 445.50,103.50" stroke="#98c379" stroke-width="1.0" fill="none" stroke-linejoin="miter"/>
<line x1="445.50" y1="103.50" x2="453.50" y2="103.50" stroke="#e06c75" stroke-width="1.0"/>
<line x1="453.50" y1="96.50" x2="453.50" y2="109.50" stroke="#e06c75" stroke-width="1.0"/>
<path d="M459.00,96.80 Q455.80,103.30 459.00,109.80" stroke="#e06c75" stroke-width="1.0" fill="none"/>
<line x1="457.50" y1="103.50" x2="464.50" y2="103.50" stroke="#e06c75" stroke-width="1.0"/>
<text x="449.40" y="109.74" fill="#e06c75" font-family="Liberation Sans" font-size="6.5" text-anchor="middle" font-weight="bold" font-style="normal">+</text>
<polyline points="464.50,103.50 474.50,103.50 474.50,113.50" stroke="#98c379" stroke-width="1.0" fill="none" stroke-linejoin="miter"/>
<line x1="474.50" y1="113.50" x2="474.50" y2="118.50" stroke="#e06c75" stroke-width="1.0"/>
<polyline points="474.50,118.50 479.50,118.50 474.50,123.50 469.50,118.50 474.50,118.50" stroke="#e06c75" stroke-width="1.0" fill="none" stroke-linejoin="miter"/>
<text x="474.20" y="131.82" fill="#56b6c2" font-family="Liberation Sans" font-size="8.2" text-anchor="middle" font-weight="bold" font-style="normal" textLength="14.20" lengthAdjust="spacingAndGlyphs">GND</text>
<text x="449.80" y="96.82" fill="#56b6c2" font-family="Liberation Sans" font-size="8.2" text-anchor="middle" font-weight="bold" font-style="normal" textLength="8.50" lengthAdjust="spacingAndGlyphs" transform="rotate(-90 449.80 94.00)">C5</text>
<text x="458.10" y="92.32" fill="#56b6c2" font-family="Liberation Sans" font-size="8.2" text-anchor="middle" font-weight="bold" font-style="normal" textLength="17.50" lengthAdjust="spacingAndGlyphs" transform="rotate(-90 458.10 89.50)">10uF</text>
<rect x="557.50" y="132.50" width="49.00" height="30.00" stroke="#e06c75" stroke-width="1.0" fill="#545862"/>
<line x1="548.50" y1="142.50" x2="557.50" y2="142.50" stroke="#e06c75" stroke-width="1.0"/>
<text x="559.90" y="145.73" fill="#98c379" font-family="Liberation Sans" font-size="8.8" text-anchor="start" font-weight="bold" font-style="normal" textLength="13.35" lengthAdjust="spacingAndGlyphs">VDD</text>
<text x="553.60" y="141.05" fill="#e06c75" font-family="Liberation Sans" font-size="8.0" text-anchor="middle" font-weight="bold" font-style="normal">1</text>
<line x1="548.50" y1="152.50" x2="557.50" y2="152.50" stroke="#e06c75" stroke-width="1.0"/>
<text x="559.90" y="155.43" fill="#98c379" font-family="Liberation Sans" font-size="8.8" text-anchor="start" font-weight="bold" font-style="normal" textLength="13.35" lengthAdjust="spacingAndGlyphs">GND</text>
<text x="553.60" y="150.75" fill="#e06c75" font-family="Liberation Sans" font-size="8.0" text-anchor="middle" font-weight="bold" font-style="normal">2</text>
<line x1="606.50" y1="142.50" x2="615.50" y2="142.50" stroke="#e06c75" stroke-width="1.0"/>
<text x="604.10" y="145.73" fill="#98c379" font-family="Liberation Sans" font-size="8.8" text-anchor="end" font-weight="bold" font-style="normal" textLength="13.35" lengthAdjust="spacingAndGlyphs">OUT</text>
<text x="611.30" y="141.05" fill="#e06c75" font-family="Liberation Sans" font-size="8.0" text-anchor="middle" font-weight="bold" font-style="normal">4</text>
<line x1="606.50" y1="152.50" x2="615.50" y2="152.50" stroke="#e06c75" stroke-width="1.0"/>
<text x="604.10" y="155.43" fill="#98c379" font-family="Liberation Sans" font-size="8.8" text-anchor="end" font-weight="bold" font-style="normal" textLength="13.35" lengthAdjust="spacingAndGlyphs">GND</text>
<text x="611.30" y="150.75" fill="#e06c75" font-family="Liberation Sans" font-size="8.0" text-anchor="middle" font-weight="bold" font-style="normal">3</text>
<circle cx="562.10" cy="137.10" r="0.9" fill="#e06c75"/>
<polyline points="548.50,142.50 538.50,142.50 538.50,133.50" stroke="#98c379" stroke-width="1.0" fill="none" stroke-linejoin="miter"/>
<line x1="538.50" y1="133.50" x2="538.50" y2="123.50" stroke="#e06c75" stroke-width="1.0"/>
<polyline points="535.50,128.50 538.50,123.50 541.50,128.50" stroke="#e06c75" stroke-width="1.0" fill="none" stroke-linejoin="miter"/>
<text x="538.50" y="121.04" fill="#56b6c2" font-family="Liberation Sans" font-size="8.2" text-anchor="middle" font-weight="bold" font-style="normal" textLength="21.00" lengthAdjust="spacingAndGlyphs">+3.3V</text>
<polyline points="548.50,152.50 543.50,152.50 543.50,172.50 621.50,172.50 621.50,152.50 615.50,152.50" stroke="#98c379" stroke-width="1.0" fill="none" stroke-linejoin="miter"/>
<circle cx="582.10" cy="172.30" r="1.9" fill="#98c379"/>
<polyline points="582.50,172.50 582.50,181.50" stroke="#98c379" stroke-width="1.0" fill="none" stroke-linejoin="miter"/>
<line x1="582.50" y1="181.50" x2="582.50" y2="186.50" stroke="#e06c75" stroke-width="1.0"/>
<polyline points="582.50,186.50 586.50,186.50 582.50,191.50 577.50,186.50 582.50,186.50" stroke="#e06c75" stroke-width="1.0" fill="none" stroke-linejoin="miter"/>
<text x="582.10" y="199.22" fill="#56b6c2" font-family="Liberation Sans" font-size="8.2" text-anchor="middle" font-weight="bold" font-style="normal" textLength="14.20" lengthAdjust="spacingAndGlyphs">GND</text>
<polyline points="615.50,142.50 631.50,142.50" stroke="#98c379" stroke-width="1.0" fill="none" stroke-linejoin="miter"/>
<polygon points="652.50,142.50 649.50,138.50 631.50,138.50 631.50,147.50 649.50,147.50 652.50,142.50" stroke="#e06c75" stroke-width="1.0" fill="none" stroke-linejoin="miter"/>
<text x="633.90" y="145.62" fill="#e06c75" font-family="Liberation Sans" font-size="8.2" text-anchor="start" font-weight="bold" font-style="normal" textLength="13.00" lengthAdjust="spacingAndGlyphs">MIC</text>
<text x="582.40" y="122.12" fill="#56b6c2" font-family="Liberation Sans" font-size="8.2" text-anchor="middle" font-weight="bold" font-style="normal" textLength="17.50" lengthAdjust="spacingAndGlyphs">MIC1</text>
<text x="582.40" y="129.92" fill="#56b6c2" font-family="Liberation Sans" font-size="8.2" text-anchor="middle" font-weight="bold" font-style="normal" textLength="56.00" lengthAdjust="spacingAndGlyphs">S15OT421-005</text>
<rect x="386.50" y="284.50" width="70.00" height="78.00" stroke="#e06c75" stroke-width="1.0" fill="#545862"/>
<line x1="377.50" y1="294.50" x2="386.50" y2="294.50" stroke="#e06c75" stroke-width="1.0"/>
<text x="389.10" y="297.53" fill="#98c379" font-family="Liberation Sans" font-size="8.8" text-anchor="start" font-weight="bold" font-style="normal" textLength="17.80" lengthAdjust="spacingAndGlyphs">OUTA</text>
<text x="382.35" y="292.85" fill="#e06c75" font-family="Liberation Sans" font-size="8.0" text-anchor="middle" font-weight="bold" font-style="normal">1</text>
<line x1="377.50" y1="304.50" x2="386.50" y2="304.50" stroke="#e06c75" stroke-width="1.0"/>
<text x="389.10" y="307.31" fill="#98c379" font-family="Liberation Sans" font-size="8.8" text-anchor="start" font-weight="bold" font-style="normal" textLength="17.80" lengthAdjust="spacingAndGlyphs">INA-</text>
<text x="382.35" y="302.63" fill="#e06c75" font-family="Liberation Sans" font-size="8.0" text-anchor="middle" font-weight="bold" font-style="normal">2</text>
<line x1="377.50" y1="314.50" x2="386.50" y2="314.50" stroke="#e06c75" stroke-width="1.0"/>
<text x="389.10" y="317.09" fill="#98c379" font-family="Liberation Sans" font-size="8.8" text-anchor="start" font-weight="bold" font-style="normal" textLength="17.80" lengthAdjust="spacingAndGlyphs">INA+</text>
<text x="382.35" y="312.41" fill="#e06c75" font-family="Liberation Sans" font-size="8.0" text-anchor="middle" font-weight="bold" font-style="normal">3</text>
<line x1="377.50" y1="323.50" x2="386.50" y2="323.50" stroke="#e06c75" stroke-width="1.0"/>
<text x="389.10" y="326.87" fill="#98c379" font-family="Liberation Sans" font-size="8.8" text-anchor="start" font-weight="bold" font-style="normal" textLength="13.35" lengthAdjust="spacingAndGlyphs">VDD</text>
<text x="382.35" y="322.19" fill="#e06c75" font-family="Liberation Sans" font-size="8.0" text-anchor="middle" font-weight="bold" font-style="normal">4</text>
<line x1="377.50" y1="333.50" x2="386.50" y2="333.50" stroke="#e06c75" stroke-width="1.0"/>
<text x="389.10" y="336.65" fill="#98c379" font-family="Liberation Sans" font-size="8.8" text-anchor="start" font-weight="bold" font-style="normal" textLength="17.80" lengthAdjust="spacingAndGlyphs">INB+</text>
<text x="382.35" y="331.97" fill="#e06c75" font-family="Liberation Sans" font-size="8.0" text-anchor="middle" font-weight="bold" font-style="normal">5</text>
<line x1="377.50" y1="343.50" x2="386.50" y2="343.50" stroke="#e06c75" stroke-width="1.0"/>
<text x="389.10" y="346.43" fill="#98c379" font-family="Liberation Sans" font-size="8.8" text-anchor="start" font-weight="bold" font-style="normal" textLength="17.80" lengthAdjust="spacingAndGlyphs">INB-</text>
<text x="382.35" y="341.75" fill="#e06c75" font-family="Liberation Sans" font-size="8.0" text-anchor="middle" font-weight="bold" font-style="normal">6</text>
<line x1="377.50" y1="353.50" x2="386.50" y2="353.50" stroke="#e06c75" stroke-width="1.0"/>
<text x="389.10" y="356.21" fill="#98c379" font-family="Liberation Sans" font-size="8.8" text-anchor="start" font-weight="bold" font-style="normal" textLength="17.80" lengthAdjust="spacingAndGlyphs">OUTB</text>
<text x="382.35" y="351.53" fill="#e06c75" font-family="Liberation Sans" font-size="8.0" text-anchor="middle" font-weight="bold" font-style="normal">7</text>
<line x1="456.50" y1="294.50" x2="464.50" y2="294.50" stroke="#e06c75" stroke-width="1.0"/>
<text x="453.40" y="297.53" fill="#98c379" font-family="Liberation Sans" font-size="8.8" text-anchor="end" font-weight="bold" font-style="normal" textLength="17.80" lengthAdjust="spacingAndGlyphs">OUTD</text>
<text x="460.40" y="292.85" fill="#e06c75" font-family="Liberation Sans" font-size="8.0" text-anchor="middle" font-weight="bold" font-style="normal">14</text>
<line x1="456.50" y1="304.50" x2="464.50" y2="304.50" stroke="#e06c75" stroke-width="1.0"/>
<text x="453.40" y="307.31" fill="#98c379" font-family="Liberation Sans" font-size="8.8" text-anchor="end" font-weight="bold" font-style="normal" textLength="17.80" lengthAdjust="spacingAndGlyphs">IND-</text>
<text x="460.40" y="302.63" fill="#e06c75" font-family="Liberation Sans" font-size="8.0" text-anchor="middle" font-weight="bold" font-style="normal">13</text>
<line x1="456.50" y1="314.50" x2="464.50" y2="314.50" stroke="#e06c75" stroke-width="1.0"/>
<text x="453.40" y="317.09" fill="#98c379" font-family="Liberation Sans" font-size="8.8" text-anchor="end" font-weight="bold" font-style="normal" textLength="17.80" lengthAdjust="spacingAndGlyphs">IND+</text>
<text x="460.40" y="312.41" fill="#e06c75" font-family="Liberation Sans" font-size="8.0" text-anchor="middle" font-weight="bold" font-style="normal">12</text>
<line x1="456.50" y1="323.50" x2="464.50" y2="323.50" stroke="#e06c75" stroke-width="1.0"/>
<text x="453.40" y="326.87" fill="#98c379" font-family="Liberation Sans" font-size="8.8" text-anchor="end" font-weight="bold" font-style="normal" textLength="13.35" lengthAdjust="spacingAndGlyphs">VSS</text>
<text x="460.40" y="322.19" fill="#e06c75" font-family="Liberation Sans" font-size="8.0" text-anchor="middle" font-weight="bold" font-style="normal">11</text>
<line x1="456.50" y1="333.50" x2="464.50" y2="333.50" stroke="#e06c75" stroke-width="1.0"/>
<text x="453.40" y="336.65" fill="#98c379" font-family="Liberation Sans" font-size="8.8" text-anchor="end" font-weight="bold" font-style="normal" textLength="17.80" lengthAdjust="spacingAndGlyphs">INC+</text>
<text x="460.40" y="331.97" fill="#e06c75" font-family="Liberation Sans" font-size="8.0" text-anchor="middle" font-weight="bold" font-style="normal">10</text>
<line x1="456.50" y1="343.50" x2="464.50" y2="343.50" stroke="#e06c75" stroke-width="1.0"/>
<text x="453.40" y="346.43" fill="#98c379" font-family="Liberation Sans" font-size="8.8" text-anchor="end" font-weight="bold" font-style="normal" textLength="17.80" lengthAdjust="spacingAndGlyphs">INC-</text>
<text x="460.40" y="341.75" fill="#e06c75" font-family="Liberation Sans" font-size="8.0" text-anchor="middle" font-weight="bold" font-style="normal">9</text>
<line x1="456.50" y1="353.50" x2="464.50" y2="353.50" stroke="#e06c75" stroke-width="1.0"/>
<text x="453.40" y="356.21" fill="#98c379" font-family="Liberation Sans" font-size="8.8" text-anchor="end" font-weight="bold" font-style="normal" textLength="17.80" lengthAdjust="spacingAndGlyphs">OUTC</text>
<text x="460.40" y="351.53" fill="#e06c75" font-family="Liberation Sans" font-size="8.0" text-anchor="middle" font-weight="bold" font-style="normal">8</text>
<circle cx="391.30" cy="289.10" r="0.9" fill="#e06c75"/>
<polygon points="335.50,284.50 339.50,279.50 367.50,279.50 367.50,288.50 339.50,288.50 335.50,284.50" stroke="#e06c75" stroke-width="1.0" fill="none" stroke-linejoin="miter"/>
<text x="341.90" y="287.42" fill="#e06c75" font-family="Liberation Sans" font-size="8.2" text-anchor="start" font-weight="bold" font-style="normal" textLength="23.40" lengthAdjust="spacingAndGlyphs">LED<tspan dy="-0.5">_</tspan><tspan dy="0.5">9</tspan></text>
<polyline points="367.50,284.50 377.50,284.50 377.50,294.50" stroke="#98c379" stroke-width="1.0" fill="none" stroke-linejoin="miter"/>
<polygon points="362.50,299.50 358.50,294.50 331.50,294.50 331.50,303.50 358.50,303.50 362.50,299.50" stroke="#e06c75" stroke-width="1.0" fill="none" stroke-linejoin="miter"/>
<text x="333.80" y="302.52" fill="#e06c75" font-family="Liberation Sans" font-size="8.2" text-anchor="start" font-weight="bold" font-style="normal" textLength="22.30" lengthAdjust="spacingAndGlyphs">AUDIO</text>
<polyline points="362.50,299.50 372.50,299.50 372.50,304.50 377.50,304.50" stroke="#98c379" stroke-width="1.0" fill="none" stroke-linejoin="miter"/>
<polygon points="362.50,314.50 358.50,309.50 331.50,309.50 331.50,318.50 358.50,318.50 362.50,314.50" stroke="#e06c75" stroke-width="1.0" fill="none" stroke-linejoin="miter"/>
<text x="333.80" y="317.18" fill="#e06c75" font-family="Liberation Sans" font-size="8.2" text-anchor="start" font-weight="bold" font-style="normal" textLength="22.30" lengthAdjust="spacingAndGlyphs">REF<tspan dy="-0.5">_</tspan><tspan dy="0.5">9</tspan></text>
<polyline points="362.50,314.50 377.50,314.50" stroke="#98c379" stroke-width="1.0" fill="none" stroke-linejoin="miter"/>
<polyline points="377.50,323.50 323.50,323.50 323.50,279.50" stroke="#98c379" stroke-width="1.0" fill="none" stroke-linejoin="miter"/>
<line x1="323.50" y1="279.50" x2="323.50" y2="269.50" stroke="#e06c75" stroke-width="1.0"/>
<polyline points="320.50,274.50 323.50,269.50 326.50,274.50" stroke="#e06c75" stroke-width="1.0" fill="none" stroke-linejoin="miter"/>
<text x="323.30" y="266.44" fill="#56b6c2" font-family="Liberation Sans" font-size="8.2" text-anchor="middle" font-weight="bold" font-style="normal" textLength="14.00" lengthAdjust="spacingAndGlyphs">+5V</text>
<polygon points="362.50,333.50 358.50,329.50 326.50,329.50 326.50,338.50 358.50,338.50 362.50,333.50" stroke="#e06c75" stroke-width="1.0" fill="none" stroke-linejoin="miter"/>
<text x="328.90" y="336.74" fill="#e06c75" font-family="Liberation Sans" font-size="8.2" text-anchor="start" font-weight="bold" font-style="normal" textLength="27.20" lengthAdjust="spacingAndGlyphs">REF<tspan dy="-0.5">_</tspan><tspan dy="0.5">10</tspan></text>
<polyline points="362.50,333.50 377.50,333.50" stroke="#98c379" stroke-width="1.0" fill="none" stroke-linejoin="miter"/>
<polygon points="362.50,347.50 358.50,343.50 331.50,343.50 331.50,352.50 358.50,352.50 362.50,347.50" stroke="#e06c75" stroke-width="1.0" fill="none" stroke-linejoin="miter"/>
<text x="333.80" y="351.02" fill="#e06c75" font-family="Liberation Sans" font-size="8.2" text-anchor="start" font-weight="bold" font-style="normal" textLength="22.30" lengthAdjust="spacingAndGlyphs">AUDIO</text>
<polyline points="362.50,347.50 372.50,347.50 372.50,343.50 377.50,343.50" stroke="#98c379" stroke-width="1.0" fill="none" stroke-linejoin="miter"/>
<polygon points="332.50,362.50 335.50,358.50 367.50,358.50 367.50,367.50 335.50,367.50 332.50,362.50" stroke="#e06c75" stroke-width="1.0" fill="none" stroke-linejoin="miter"/>
<text x="338.50" y="365.82" fill="#e06c75" font-family="Liberation Sans" font-size="8.2" text-anchor="start" font-weight="bold" font-style="normal" textLength="26.80" lengthAdjust="spacingAndGlyphs">LED<tspan dy="-0.5">_</tspan><tspan dy="0.5">10</tspan></text>
<polyline points="367.50,362.50 377.50,362.50 377.50,353.50" stroke="#98c379" stroke-width="1.0" fill="none" stroke-linejoin="miter"/>
<line x1="462.50" y1="330.50" x2="467.50" y2="336.50" stroke="#61afef" stroke-width="1.0"/>
<line x1="462.50" y1="336.50" x2="467.50" y2="330.50" stroke="#61afef" stroke-width="1.0"/>
<line x1="462.50" y1="340.50" x2="467.50" y2="346.50" stroke="#61afef" stroke-width="1.0"/>
<line x1="462.50" y1="346.50" x2="467.50" y2="340.50" stroke="#61afef" stroke-width="1.0"/>
<line x1="462.50" y1="350.50" x2="467.50" y2="356.50" stroke="#61afef" stroke-width="1.0"/>
<line x1="462.50" y1="356.50" x2="467.50" y2="350.50" stroke="#61afef" stroke-width="1.0"/>
<polyline points="464.50,294.50 474.50,294.50 474.50,289.50" stroke="#98c379" stroke-width="1.0" fill="none" stroke-linejoin="miter"/>
<circle cx="474.80" cy="289.30" r="1.9" fill="#98c379"/>
<polyline points="474.50,289.50 474.50,250.50 490.50,250.50" stroke="#98c379" stroke-width="1.0" fill="none" stroke-linejoin="miter"/>
<polyline points="474.50,289.50 518.50,289.50 518.50,264.50 543.50,264.50 543.50,275.50" stroke="#98c379" stroke-width="1.0" fill="none" stroke-linejoin="miter"/>
<polyline points="464.50,304.50 621.50,304.50 621.50,289.50" stroke="#98c379" stroke-width="1.0" fill="none" stroke-linejoin="miter"/>
<polyline points="464.50,314.50 621.50,314.50 621.50,358.50" stroke="#98c379" stroke-width="1.0" fill="none" stroke-linejoin="miter"/>
<polyline points="464.50,323.50 499.50,323.50 499.50,357.50" stroke="#98c379" stroke-width="1.0" fill="none" stroke-linejoin="miter"/>
<line x1="499.50" y1="357.50" x2="499.50" y2="362.50" stroke="#e06c75" stroke-width="1.0"/>
<polyline points="499.50,362.50 504.50,362.50 499.50,367.50 494.50,362.50 499.50,362.50" stroke="#e06c75" stroke-width="1.0" fill="none" stroke-linejoin="miter"/>
<text x="499.20" y="375.72" fill="#56b6c2" font-family="Liberation Sans" font-size="8.2" text-anchor="middle" font-weight="bold" font-style="normal" textLength="14.20" lengthAdjust="spacingAndGlyphs">GND</text>
<text x="421.60" y="273.42" fill="#56b6c2" font-family="Liberation Sans" font-size="8.2" text-anchor="middle" font-weight="bold" font-style="normal" textLength="9.00" lengthAdjust="spacingAndGlyphs">U3</text>
<text x="421.60" y="281.62" fill="#56b6c2" font-family="Liberation Sans" font-size="8.2" text-anchor="middle" font-weight="bold" font-style="normal" textLength="38.00" lengthAdjust="spacingAndGlyphs">COS3245R</text>
<line x1="490.50" y1="250.50" x2="497.50" y2="250.50" stroke="#e06c75" stroke-width="1.0"/>
<line x1="497.50" y1="243.50" x2="497.50" y2="256.50" stroke="#e06c75" stroke-width="1.0"/>
<path d="M502.60,243.80 Q499.40,250.30 502.60,256.80" stroke="#e06c75" stroke-width="1.0" fill="none"/>
<line x1="501.50" y1="250.50" x2="507.50" y2="250.50" stroke="#e06c75" stroke-width="1.0"/>
<text x="493.60" y="256.74" fill="#e06c75" font-family="Liberation Sans" font-size="6.5" text-anchor="middle" font-weight="bold" font-style="normal">+</text>
<polyline points="507.50,250.50 533.50,250.50" stroke="#98c379" stroke-width="1.0" fill="none" stroke-linejoin="miter"/>
<polygon points="564.50,250.50 561.50,246.50 533.50,246.50 533.50,255.50 561.50,255.50 564.50,250.50" stroke="#e06c75" stroke-width="1.0" fill="none" stroke-linejoin="miter"/>
<text x="536.10" y="253.62" fill="#e06c75" font-family="Liberation Sans" font-size="8.2" text-anchor="start" font-weight="bold" font-style="normal" textLength="22.30" lengthAdjust="spacingAndGlyphs">AUDIO</text>
<text x="497.00" y="233.02" fill="#56b6c2" font-family="Liberation Sans" font-size="8.2" text-anchor="middle" font-weight="bold" font-style="normal" textLength="9.00" lengthAdjust="spacingAndGlyphs">C1</text>
<text x="497.00" y="241.02" fill="#56b6c2" font-family="Liberation Sans" font-size="8.2" text-anchor="middle" font-weight="bold" font-style="normal" textLength="17.50" lengthAdjust="spacingAndGlyphs">22uF</text>
<rect x="533.50" y="285.50" width="19.00" height="10.00" stroke="#e06c75" stroke-width="1.0" fill="#545862"/>
<line x1="523.50" y1="289.50" x2="533.50" y2="289.50" stroke="#e06c75" stroke-width="1.0"/>
<circle cx="523.5" cy="289.3" r="0.9" fill="#e06c75"/>
<line x1="552.50" y1="289.50" x2="561.50" y2="289.50" stroke="#e06c75" stroke-width="1.0"/>
<line x1="543.50" y1="275.50" x2="543.50" y2="284.50" stroke="#e06c75" stroke-width="1.0"/>
<polyline points="541.50,281.50 543.50,284.50 545.50,281.50" stroke="#e06c75" stroke-width="1.0" fill="none" stroke-linejoin="miter"/>
<text x="536.00" y="283.74" fill="#e06c75" font-family="Liberation Sans" font-size="6.5" text-anchor="middle" font-weight="bold" font-style="normal">2</text>
<text x="528.30" y="287.35" fill="#e06c75" font-family="Liberation Sans" font-size="8.0" text-anchor="middle" font-weight="bold" font-style="normal">1</text>
<text x="558.00" y="287.35" fill="#e06c75" font-family="Liberation Sans" font-size="8.0" text-anchor="middle" font-weight="bold" font-style="normal">3</text>
<text x="542.90" y="292.95" fill="#98c379" font-family="Liberation Sans" font-size="8.0" text-anchor="middle" font-weight="bold" font-style="normal" textLength="15.00" lengthAdjust="spacingAndGlyphs">1K3</text>
<text x="563.80" y="267.92" fill="#56b6c2" font-family="Liberation Sans" font-size="8.2" text-anchor="start" font-weight="bold" font-style="normal" textLength="13.50" lengthAdjust="spacingAndGlyphs">R46</text>
<text x="563.80" y="277.32" fill="#56b6c2" font-family="Liberation Sans" font-size="8.2" text-anchor="start" font-weight="bold" font-style="normal" textLength="62.00" lengthAdjust="spacingAndGlyphs">YG039NCHXTB504</text>
<text x="563.80" y="287.32" fill="#56b6c2" font-family="Liberation Sans" font-size="8.2" text-anchor="start" font-weight="bold" font-style="normal" textLength="17.50" lengthAdjust="spacingAndGlyphs">500k</text>
<polyline points="561.50,289.50 631.50,289.50" stroke="#98c379" stroke-width="1.0" fill="none" stroke-linejoin="miter"/>
<circle cx="621.20" cy="289.30" r="1.9" fill="#98c379"/>
<rect x="636.50" y="285.50" width="20.00" height="8.00" stroke="#e06c75" stroke-width="1.0" fill="none"/>
<line x1="631.50" y1="289.50" x2="636.50" y2="289.50" stroke="#e06c75" stroke-width="1.0"/>
<line x1="656.50" y1="289.50" x2="661.50" y2="289.50" stroke="#e06c75" stroke-width="1.0"/>
<polyline points="661.50,289.50 671.50,289.50" stroke="#98c379" stroke-width="1.0" fill="none" stroke-linejoin="miter"/>
<text x="645.80" y="273.82" fill="#56b6c2" font-family="Liberation Sans" font-size="8.2" text-anchor="middle" font-weight="bold" font-style="normal" textLength="13.50" lengthAdjust="spacingAndGlyphs">R12</text>
<text x="645.80" y="281.52" fill="#56b6c2" font-family="Liberation Sans" font-size="8.2" text-anchor="middle" font-weight="bold" font-style="normal" textLength="15.50" lengthAdjust="spacingAndGlyphs">2.2k</text>
<line x1="671.50" y1="289.50" x2="677.50" y2="289.50" stroke="#e06c75" stroke-width="1.0"/>
<line x1="677.50" y1="282.50" x2="677.50" y2="295.50" stroke="#e06c75" stroke-width="1.0"/>
<path d="M683.20,282.80 Q680.00,289.30 683.20,295.80" stroke="#e06c75" stroke-width="1.0" fill="none"/>
<line x1="681.50" y1="289.50" x2="688.50" y2="289.50" stroke="#e06c75" stroke-width="1.0"/>
<text x="673.60" y="295.74" fill="#e06c75" font-family="Liberation Sans" font-size="6.5" text-anchor="middle" font-weight="bold" font-style="normal">+</text>
<polyline points="688.50,289.50 705.50,289.50" stroke="#98c379" stroke-width="1.0" fill="none" stroke-linejoin="miter"/>
<polygon points="705.50,289.50 708.50,284.50 727.50,284.50 727.50,293.50 708.50,293.50 705.50,289.50" stroke="#e06c75" stroke-width="1.0" fill="none" stroke-linejoin="miter"/>
<text x="711.10" y="292.52" fill="#e06c75" font-family="Liberation Sans" font-size="8.2" text-anchor="start" font-weight="bold" font-style="normal" textLength="13.30" lengthAdjust="spacingAndGlyphs">MIC</text>
<text x="678.60" y="272.12" fill="#56b6c2" font-family="Liberation Sans" font-size="8.2" text-anchor="middle" font-weight="bold" font-style="normal" textLength="9.00" lengthAdjust="spacingAndGlyphs">C2</text>
<text x="678.60" y="279.82" fill="#56b6c2" font-family="Liberation Sans" font-size="8.2" text-anchor="middle" font-weight="bold" font-style="normal" textLength="22.00" lengthAdjust="spacingAndGlyphs">2.2uF</text>
<text x="578.20" y="242.72" fill="#61afef" font-family="Liberation Sans" font-size="8.2" text-anchor="start" font-weight="normal" font-style="normal" textLength="14.80" lengthAdjust="spacingAndGlyphs">Gain</text>
<text x="616.50" y="242.72" fill="#61afef" font-family="Liberation Sans" font-size="8.2" text-anchor="start" font-weight="normal" font-style="normal" textLength="42.50" lengthAdjust="spacingAndGlyphs">= R46/R12</text>
<text x="616.50" y="251.02" fill="#61afef" font-family="Liberation Sans" font-size="8.2" text-anchor="start" font-weight="normal" font-style="normal" textLength="54.60" lengthAdjust="spacingAndGlyphs">= 500k / 2.2k</text>
<text x="616.50" y="259.12" fill="#61afef" font-family="Liberation Sans" font-size="8.2" text-anchor="start" font-weight="normal" font-style="normal" textLength="40.50" lengthAdjust="spacingAndGlyphs">= 227 MAX</text>
<line x1="655.50" y1="319.50" x2="655.50" y2="310.50" stroke="#e06c75" stroke-width="1.0"/>
<polyline points="652.50,315.50 655.50,310.50 658.50,315.50" stroke="#e06c75" stroke-width="1.0" fill="none" stroke-linejoin="miter"/>
<text x="655.40" y="307.34" fill="#56b6c2" font-family="Liberation Sans" font-size="8.2" text-anchor="middle" font-weight="bold" font-style="normal" textLength="14.00" lengthAdjust="spacingAndGlyphs">+5V</text>
<polyline points="655.50,319.50 655.50,323.50" stroke="#98c379" stroke-width="1.0" fill="none" stroke-linejoin="miter"/>
<rect x="651.50" y="328.50" width="8.00" height="19.00" stroke="#e06c75" stroke-width="1.0" fill="none"/>
<line x1="655.50" y1="323.50" x2="655.50" y2="328.50" stroke="#e06c75" stroke-width="1.0"/>
<line x1="655.50" y1="347.50" x2="655.50" y2="352.50" stroke="#e06c75" stroke-width="1.0"/>
<text x="662.90" y="336.62" fill="#56b6c2" font-family="Liberation Sans" font-size="8.2" text-anchor="start" font-weight="bold" font-style="normal">R14</text>
<text x="662.90" y="345.02" fill="#56b6c2" font-family="Liberation Sans" font-size="8.2" text-anchor="start" font-weight="bold" font-style="normal">10k</text>
<rect x="651.50" y="367.50" width="8.00" height="20.00" stroke="#e06c75" stroke-width="1.0" fill="none"/>
<line x1="655.50" y1="362.50" x2="655.50" y2="367.50" stroke="#e06c75" stroke-width="1.0"/>
<line x1="655.50" y1="387.50" x2="655.50" y2="392.50" stroke="#e06c75" stroke-width="1.0"/>
<text x="662.90" y="376.22" fill="#56b6c2" font-family="Liberation Sans" font-size="8.2" text-anchor="start" font-weight="bold" font-style="normal">R15</text>
<text x="662.90" y="384.62" fill="#56b6c2" font-family="Liberation Sans" font-size="8.2" text-anchor="start" font-weight="bold" font-style="normal">10k</text>
<polyline points="655.50,352.50 655.50,362.50" stroke="#98c379" stroke-width="1.0" fill="none" stroke-linejoin="miter"/>
<polyline points="621.50,358.50 655.50,358.50" stroke="#98c379" stroke-width="1.0" fill="none" stroke-linejoin="miter"/>
<circle cx="621.50" cy="358.10" r="1.9" fill="#98c379"/>
<circle cx="655.40" cy="358.10" r="1.9" fill="#98c379"/>
<polyline points="655.50,392.50 655.50,401.50 621.50,401.50 621.50,386.50" stroke="#98c379" stroke-width="1.0" fill="none" stroke-linejoin="miter"/>
<polyline points="621.50,358.50 621.50,368.50" stroke="#98c379" stroke-width="1.0" fill="none" stroke-linejoin="miter"/>
<line x1="621.50" y1="368.50" x2="621.50" y2="375.50" stroke="#e06c75" stroke-width="1.0"/>
<line x1="615.50" y1="375.50" x2="628.50" y2="375.50" stroke="#e06c75" stroke-width="1.0"/>
<path d="M615.00,380.90 Q621.50,377.70 628.00,380.90" stroke="#e06c75" stroke-width="1.0" fill="none"/>
<line x1="621.50" y1="379.50" x2="621.50" y2="386.50" stroke="#e06c75" stroke-width="1.0"/>
<text x="617.30" y="373.44" fill="#e06c75" font-family="Liberation Sans" font-size="6.5" text-anchor="middle" font-weight="bold" font-style="normal">+</text>
<circle cx="636.20" cy="401.30" r="1.9" fill="#98c379"/>
<polyline points="636.50,401.50 636.50,411.50" stroke="#98c379" stroke-width="1.0" fill="none" stroke-linejoin="miter"/>
<line x1="636.50" y1="411.50" x2="636.50" y2="416.50" stroke="#e06c75" stroke-width="1.0"/>
<polyline points="636.50,416.50 641.50,416.50 636.50,421.50 631.50,416.50 636.50,416.50" stroke="#e06c75" stroke-width="1.0" fill="none" stroke-linejoin="miter"/>
<text x="636.20" y="429.32" fill="#56b6c2" font-family="Liberation Sans" font-size="8.2" text-anchor="middle" font-weight="bold" font-style="normal" textLength="14.20" lengthAdjust="spacingAndGlyphs">GND</text>
<text x="626.70" y="375.22" fill="#56b6c2" font-family="Liberation Sans" font-size="8.2" text-anchor="start" font-weight="bold" font-style="normal" textLength="9.00" lengthAdjust="spacingAndGlyphs">C3</text>
<text x="626.70" y="383.02" fill="#56b6c2" font-family="Liberation Sans" font-size="8.2" text-anchor="start" font-weight="bold" font-style="normal" textLength="22.00" lengthAdjust="spacingAndGlyphs">3.3uF</text>
<rect x="367.50" y="504.50" width="68.00" height="78.00" stroke="#e06c75" stroke-width="1.0" fill="#545862"/>
<line x1="357.50" y1="514.50" x2="367.50" y2="514.50" stroke="#e06c75" stroke-width="1.0"/>
<text x="369.90" y="517.33" fill="#98c379" font-family="Liberation Sans" font-size="8.8" text-anchor="start" font-weight="bold" font-style="normal" textLength="17.80" lengthAdjust="spacingAndGlyphs">OUTA</text>
<text x="363.05" y="512.65" fill="#e06c75" font-family="Liberation Sans" font-size="8.0" text-anchor="middle" font-weight="bold" font-style="normal">1</text>
<line x1="357.50" y1="524.50" x2="367.50" y2="524.50" stroke="#e06c75" stroke-width="1.0"/>
<text x="369.90" y="527.11" fill="#98c379" font-family="Liberation Sans" font-size="8.8" text-anchor="start" font-weight="bold" font-style="normal" textLength="17.80" lengthAdjust="spacingAndGlyphs">INA-</text>
<text x="363.05" y="522.43" fill="#e06c75" font-family="Liberation Sans" font-size="8.0" text-anchor="middle" font-weight="bold" font-style="normal">2</text>
<line x1="357.50" y1="533.50" x2="367.50" y2="533.50" stroke="#e06c75" stroke-width="1.0"/>
<text x="369.90" y="536.89" fill="#98c379" font-family="Liberation Sans" font-size="8.8" text-anchor="start" font-weight="bold" font-style="normal" textLength="17.80" lengthAdjust="spacingAndGlyphs">INA+</text>
<text x="363.05" y="532.21" fill="#e06c75" font-family="Liberation Sans" font-size="8.0" text-anchor="middle" font-weight="bold" font-style="normal">3</text>
<line x1="357.50" y1="543.50" x2="367.50" y2="543.50" stroke="#e06c75" stroke-width="1.0"/>
<text x="369.90" y="546.67" fill="#98c379" font-family="Liberation Sans" font-size="8.8" text-anchor="start" font-weight="bold" font-style="normal" textLength="13.35" lengthAdjust="spacingAndGlyphs">VDD</text>
<text x="363.05" y="541.99" fill="#e06c75" font-family="Liberation Sans" font-size="8.0" text-anchor="middle" font-weight="bold" font-style="normal">4</text>
<line x1="357.50" y1="553.50" x2="367.50" y2="553.50" stroke="#e06c75" stroke-width="1.0"/>
<text x="369.90" y="556.45" fill="#98c379" font-family="Liberation Sans" font-size="8.8" text-anchor="start" font-weight="bold" font-style="normal" textLength="17.80" lengthAdjust="spacingAndGlyphs">INB+</text>
<text x="363.05" y="551.77" fill="#e06c75" font-family="Liberation Sans" font-size="8.0" text-anchor="middle" font-weight="bold" font-style="normal">5</text>
<line x1="357.50" y1="563.50" x2="367.50" y2="563.50" stroke="#e06c75" stroke-width="1.0"/>
<text x="369.90" y="566.23" fill="#98c379" font-family="Liberation Sans" font-size="8.8" text-anchor="start" font-weight="bold" font-style="normal" textLength="17.80" lengthAdjust="spacingAndGlyphs">INB-</text>
<text x="363.05" y="561.55" fill="#e06c75" font-family="Liberation Sans" font-size="8.0" text-anchor="middle" font-weight="bold" font-style="normal">6</text>
<line x1="357.50" y1="572.50" x2="367.50" y2="572.50" stroke="#e06c75" stroke-width="1.0"/>
<text x="369.90" y="576.01" fill="#98c379" font-family="Liberation Sans" font-size="8.8" text-anchor="start" font-weight="bold" font-style="normal" textLength="17.80" lengthAdjust="spacingAndGlyphs">OUTB</text>
<text x="363.05" y="571.33" fill="#e06c75" font-family="Liberation Sans" font-size="8.0" text-anchor="middle" font-weight="bold" font-style="normal">7</text>
<line x1="435.50" y1="514.50" x2="445.50" y2="514.50" stroke="#e06c75" stroke-width="1.0"/>
<text x="432.90" y="517.33" fill="#98c379" font-family="Liberation Sans" font-size="8.8" text-anchor="end" font-weight="bold" font-style="normal" textLength="17.80" lengthAdjust="spacingAndGlyphs">OUTD</text>
<text x="440.30" y="512.65" fill="#e06c75" font-family="Liberation Sans" font-size="8.0" text-anchor="middle" font-weight="bold" font-style="normal">14</text>
<line x1="435.50" y1="524.50" x2="445.50" y2="524.50" stroke="#e06c75" stroke-width="1.0"/>
<text x="432.90" y="527.11" fill="#98c379" font-family="Liberation Sans" font-size="8.8" text-anchor="end" font-weight="bold" font-style="normal" textLength="17.80" lengthAdjust="spacingAndGlyphs">IND-</text>
<text x="440.30" y="522.43" fill="#e06c75" font-family="Liberation Sans" font-size="8.0" text-anchor="middle" font-weight="bold" font-style="normal">13</text>
<line x1="435.50" y1="533.50" x2="445.50" y2="533.50" stroke="#e06c75" stroke-width="1.0"/>
<text x="432.90" y="536.89" fill="#98c379" font-family="Liberation Sans" font-size="8.8" text-anchor="end" font-weight="bold" font-style="normal" textLength="17.80" lengthAdjust="spacingAndGlyphs">IND+</text>
<text x="440.30" y="532.21" fill="#e06c75" font-family="Liberation Sans" font-size="8.0" text-anchor="middle" font-weight="bold" font-style="normal">12</text>
<line x1="435.50" y1="543.50" x2="445.50" y2="543.50" stroke="#e06c75" stroke-width="1.0"/>
<text x="432.90" y="546.67" fill="#98c379" font-family="Liberation Sans" font-size="8.8" text-anchor="end" font-weight="bold" font-style="normal" textLength="13.35" lengthAdjust="spacingAndGlyphs">VSS</text>
<text x="440.30" y="541.99" fill="#e06c75" font-family="Liberation Sans" font-size="8.0" text-anchor="middle" font-weight="bold" font-style="normal">11</text>
<line x1="435.50" y1="553.50" x2="445.50" y2="553.50" stroke="#e06c75" stroke-width="1.0"/>
<text x="432.90" y="556.45" fill="#98c379" font-family="Liberation Sans" font-size="8.8" text-anchor="end" font-weight="bold" font-style="normal" textLength="17.80" lengthAdjust="spacingAndGlyphs">INC+</text>
<text x="440.30" y="551.77" fill="#e06c75" font-family="Liberation Sans" font-size="8.0" text-anchor="middle" font-weight="bold" font-style="normal">10</text>
<line x1="435.50" y1="563.50" x2="445.50" y2="563.50" stroke="#e06c75" stroke-width="1.0"/>
<text x="432.90" y="566.23" fill="#98c379" font-family="Liberation Sans" font-size="8.8" text-anchor="end" font-weight="bold" font-style="normal" textLength="17.80" lengthAdjust="spacingAndGlyphs">INC-</text>
<text x="440.30" y="561.55" fill="#e06c75" font-family="Liberation Sans" font-size="8.0" text-anchor="middle" font-weight="bold" font-style="normal">9</text>
<line x1="435.50" y1="572.50" x2="445.50" y2="572.50" stroke="#e06c75" stroke-width="1.0"/>
<text x="432.90" y="576.01" fill="#98c379" font-family="Liberation Sans" font-size="8.8" text-anchor="end" font-weight="bold" font-style="normal" textLength="17.80" lengthAdjust="spacingAndGlyphs">OUTC</text>
<text x="440.30" y="571.33" fill="#e06c75" font-family="Liberation Sans" font-size="8.0" text-anchor="middle" font-weight="bold" font-style="normal">8</text>
<circle cx="372.10" cy="509.00" r="0.9" fill="#e06c75"/>
<polygon points="316.50,504.50 320.50,500.50 347.50,500.50 347.50,509.50 320.50,509.50 316.50,504.50" stroke="#e06c75" stroke-width="1.0" fill="none" stroke-linejoin="miter"/>
<text x="323.00" y="507.82" fill="#e06c75" font-family="Liberation Sans" font-size="8.2" text-anchor="start" font-weight="bold" font-style="normal" textLength="22.20" lengthAdjust="spacingAndGlyphs">LED<tspan dy="-0.5">_</tspan><tspan dy="0.5">5</tspan></text>
<polyline points="347.50,504.50 357.50,504.50 357.50,514.50" stroke="#98c379" stroke-width="1.0" fill="none" stroke-linejoin="miter"/>
<polygon points="342.50,518.50 338.50,514.50 311.50,514.50 311.50,523.50 338.50,523.50 342.50,518.50" stroke="#e06c75" stroke-width="1.0" fill="none" stroke-linejoin="miter"/>
<text x="314.70" y="522.02" fill="#e06c75" font-family="Liberation Sans" font-size="8.2" text-anchor="start" font-weight="bold" font-style="normal" textLength="21.60" lengthAdjust="spacingAndGlyphs">AUDIO</text>
<polyline points="342.50,518.50 352.50,518.50 352.50,524.50 357.50,524.50" stroke="#98c379" stroke-width="1.0" fill="none" stroke-linejoin="miter"/>
<polygon points="342.50,533.50 338.50,529.50 311.50,529.50 311.50,538.50 338.50,538.50 342.50,533.50" stroke="#e06c75" stroke-width="1.0" fill="none" stroke-linejoin="miter"/>
<text x="314.70" y="536.98" fill="#e06c75" font-family="Liberation Sans" font-size="8.2" text-anchor="start" font-weight="bold" font-style="normal" textLength="21.60" lengthAdjust="spacingAndGlyphs">REF<tspan dy="-0.5">_</tspan><tspan dy="0.5">5</tspan></text>
<polyline points="342.50,533.50 357.50,533.50" stroke="#98c379" stroke-width="1.0" fill="none" stroke-linejoin="miter"/>
<polyline points="357.50,543.50 308.50,543.50 308.50,499.50" stroke="#98c379" stroke-width="1.0" fill="none" stroke-linejoin="miter"/>
<line x1="308.50" y1="499.50" x2="308.50" y2="490.50" stroke="#e06c75" stroke-width="1.0"/>
<polyline points="305.50,494.50 308.50,490.50 311.50,494.50" stroke="#e06c75" stroke-width="1.0" fill="none" stroke-linejoin="miter"/>
<text x="308.30" y="487.24" fill="#56b6c2" font-family="Liberation Sans" font-size="8.2" text-anchor="middle" font-weight="bold" font-style="normal" textLength="14.00" lengthAdjust="spacingAndGlyphs">+5V</text>
<polygon points="342.50,553.50 338.50,548.50 311.50,548.50 311.50,557.50 338.50,557.50 342.50,553.50" stroke="#e06c75" stroke-width="1.0" fill="none" stroke-linejoin="miter"/>
<text x="314.70" y="556.54" fill="#e06c75" font-family="Liberation Sans" font-size="8.2" text-anchor="start" font-weight="bold" font-style="normal" textLength="21.60" lengthAdjust="spacingAndGlyphs">REF<tspan dy="-0.5">_</tspan><tspan dy="0.5">6</tspan></text>
<polyline points="342.50,553.50 357.50,553.50" stroke="#98c379" stroke-width="1.0" fill="none" stroke-linejoin="miter"/>
<polygon points="342.50,567.50 338.50,563.50 311.50,563.50 311.50,572.50 338.50,572.50 342.50,567.50" stroke="#e06c75" stroke-width="1.0" fill="none" stroke-linejoin="miter"/>
<text x="314.70" y="570.82" fill="#e06c75" font-family="Liberation Sans" font-size="8.2" text-anchor="start" font-weight="bold" font-style="normal" textLength="21.60" lengthAdjust="spacingAndGlyphs">AUDIO</text>
<polyline points="342.50,567.50 352.50,567.50 352.50,563.50 357.50,563.50" stroke="#98c379" stroke-width="1.0" fill="none" stroke-linejoin="miter"/>
<polygon points="316.50,582.50 320.50,578.50 347.50,578.50 347.50,587.50 320.50,587.50 316.50,582.50" stroke="#e06c75" stroke-width="1.0" fill="none" stroke-linejoin="miter"/>
<text x="323.00" y="585.72" fill="#e06c75" font-family="Liberation Sans" font-size="8.2" text-anchor="start" font-weight="bold" font-style="normal" textLength="22.20" lengthAdjust="spacingAndGlyphs">LED<tspan dy="-0.5">_</tspan><tspan dy="0.5">6</tspan></text>
<polyline points="347.50,582.50 357.50,582.50 357.50,572.50" stroke="#98c379" stroke-width="1.0" fill="none" stroke-linejoin="miter"/>
<polygon points="485.50,504.50 482.50,500.50 455.50,500.50 455.50,509.50 482.50,509.50 485.50,504.50" stroke="#e06c75" stroke-width="1.0" fill="none" stroke-linejoin="miter"/>
<text x="457.80" y="508.02" fill="#e06c75" font-family="Liberation Sans" font-size="8.2" text-anchor="start" font-weight="bold" font-style="normal" textLength="21.60" lengthAdjust="spacingAndGlyphs">LED<tspan dy="-0.5">_</tspan><tspan dy="0.5">7</tspan></text>
<polyline points="445.50,514.50 445.50,514.50 445.50,504.50 455.50,504.50" stroke="#98c379" stroke-width="1.0" fill="none" stroke-linejoin="miter"/>
<polygon points="460.50,518.50 463.50,514.50 490.50,514.50 490.50,523.50 463.50,523.50 460.50,518.50" stroke="#e06c75" stroke-width="1.0" fill="none" stroke-linejoin="miter"/>
<text x="466.50" y="522.02" fill="#e06c75" font-family="Liberation Sans" font-size="8.2" text-anchor="start" font-weight="bold" font-style="normal" textLength="21.20" lengthAdjust="spacingAndGlyphs">AUDIO</text>
<polyline points="445.50,524.50 450.50,524.50 450.50,518.50 460.50,518.50" stroke="#98c379" stroke-width="1.0" fill="none" stroke-linejoin="miter"/>
<polygon points="460.50,533.50 463.50,529.50 490.50,529.50 490.50,538.50 463.50,538.50 460.50,533.50" stroke="#e06c75" stroke-width="1.0" fill="none" stroke-linejoin="miter"/>
<text x="466.50" y="536.98" fill="#e06c75" font-family="Liberation Sans" font-size="8.2" text-anchor="start" font-weight="bold" font-style="normal" textLength="21.20" lengthAdjust="spacingAndGlyphs">REF<tspan dy="-0.5">_</tspan><tspan dy="0.5">7</tspan></text>
<polyline points="445.50,533.50 460.50,533.50" stroke="#98c379" stroke-width="1.0" fill="none" stroke-linejoin="miter"/>
<polyline points="445.50,543.50 499.50,543.50 499.50,578.50" stroke="#98c379" stroke-width="1.0" fill="none" stroke-linejoin="miter"/>
<line x1="499.50" y1="578.50" x2="499.50" y2="583.50" stroke="#e06c75" stroke-width="1.0"/>
<polyline points="499.50,583.50 504.50,583.50 499.50,588.50 494.50,583.50 499.50,583.50" stroke="#e06c75" stroke-width="1.0" fill="none" stroke-linejoin="miter"/>
<text x="499.70" y="596.62" fill="#56b6c2" font-family="Liberation Sans" font-size="8.2" text-anchor="middle" font-weight="bold" font-style="normal" textLength="14.20" lengthAdjust="spacingAndGlyphs">GND</text>
<polygon points="460.50,553.50 463.50,548.50 490.50,548.50 490.50,557.50 463.50,557.50 460.50,553.50" stroke="#e06c75" stroke-width="1.0" fill="none" stroke-linejoin="miter"/>
<text x="466.50" y="556.54" fill="#e06c75" font-family="Liberation Sans" font-size="8.2" text-anchor="start" font-weight="bold" font-style="normal" textLength="21.20" lengthAdjust="spacingAndGlyphs">REF<tspan dy="-0.5">_</tspan><tspan dy="0.5">8</tspan></text>
<polyline points="445.50,553.50 460.50,553.50" stroke="#98c379" stroke-width="1.0" fill="none" stroke-linejoin="miter"/>
<polygon points="460.50,567.50 463.50,563.50 490.50,563.50 490.50,572.50 463.50,572.50 460.50,567.50" stroke="#e06c75" stroke-width="1.0" fill="none" stroke-linejoin="miter"/>
<text x="466.50" y="570.82" fill="#e06c75" font-family="Liberation Sans" font-size="8.2" text-anchor="start" font-weight="bold" font-style="normal" textLength="21.20" lengthAdjust="spacingAndGlyphs">AUDIO</text>
<polyline points="445.50,563.50 450.50,563.50 450.50,567.50 460.50,567.50" stroke="#98c379" stroke-width="1.0" fill="none" stroke-linejoin="miter"/>
<polygon points="485.50,582.50 482.50,578.50 455.50,578.50 455.50,587.50 482.50,587.50 485.50,582.50" stroke="#e06c75" stroke-width="1.0" fill="none" stroke-linejoin="miter"/>
<text x="457.80" y="585.72" fill="#e06c75" font-family="Liberation Sans" font-size="8.2" text-anchor="start" font-weight="bold" font-style="normal" textLength="21.60" lengthAdjust="spacingAndGlyphs">LED<tspan dy="-0.5">_</tspan><tspan dy="0.5">8</tspan></text>
<polyline points="445.50,572.50 445.50,572.50 445.50,582.50 455.50,582.50" stroke="#98c379" stroke-width="1.0" fill="none" stroke-linejoin="miter"/>
<text x="401.60" y="493.32" fill="#56b6c2" font-family="Liberation Sans" font-size="8.2" text-anchor="middle" font-weight="bold" font-style="normal" textLength="9.00" lengthAdjust="spacingAndGlyphs">U2</text>
<text x="401.60" y="501.72" fill="#56b6c2" font-family="Liberation Sans" font-size="8.2" text-anchor="middle" font-weight="bold" font-style="normal" textLength="38.00" lengthAdjust="spacingAndGlyphs">COS3245R</text>
<rect x="367.50" y="641.50" width="68.00" height="78.00" stroke="#e06c75" stroke-width="1.0" fill="#545862"/>
<line x1="357.50" y1="651.50" x2="367.50" y2="651.50" stroke="#e06c75" stroke-width="1.0"/>
<text x="369.90" y="654.33" fill="#98c379" font-family="Liberation Sans" font-size="8.8" text-anchor="start" font-weight="bold" font-style="normal" textLength="17.80" lengthAdjust="spacingAndGlyphs">OUTA</text>
<text x="363.05" y="649.65" fill="#e06c75" font-family="Liberation Sans" font-size="8.0" text-anchor="middle" font-weight="bold" font-style="normal">1</text>
<line x1="357.50" y1="661.50" x2="367.50" y2="661.50" stroke="#e06c75" stroke-width="1.0"/>
<text x="369.90" y="664.11" fill="#98c379" font-family="Liberation Sans" font-size="8.8" text-anchor="start" font-weight="bold" font-style="normal" textLength="17.80" lengthAdjust="spacingAndGlyphs">INA-</text>
<text x="363.05" y="659.43" fill="#e06c75" font-family="Liberation Sans" font-size="8.0" text-anchor="middle" font-weight="bold" font-style="normal">2</text>
<line x1="357.50" y1="670.50" x2="367.50" y2="670.50" stroke="#e06c75" stroke-width="1.0"/>
<text x="369.90" y="673.89" fill="#98c379" font-family="Liberation Sans" font-size="8.8" text-anchor="start" font-weight="bold" font-style="normal" textLength="17.80" lengthAdjust="spacingAndGlyphs">INA+</text>
<text x="363.05" y="669.21" fill="#e06c75" font-family="Liberation Sans" font-size="8.0" text-anchor="middle" font-weight="bold" font-style="normal">3</text>
<line x1="357.50" y1="680.50" x2="367.50" y2="680.50" stroke="#e06c75" stroke-width="1.0"/>
<text x="369.90" y="683.67" fill="#98c379" font-family="Liberation Sans" font-size="8.8" text-anchor="start" font-weight="bold" font-style="normal" textLength="13.35" lengthAdjust="spacingAndGlyphs">VDD</text>
<text x="363.05" y="678.99" fill="#e06c75" font-family="Liberation Sans" font-size="8.0" text-anchor="middle" font-weight="bold" font-style="normal">4</text>
<line x1="357.50" y1="690.50" x2="367.50" y2="690.50" stroke="#e06c75" stroke-width="1.0"/>
<text x="369.90" y="693.45" fill="#98c379" font-family="Liberation Sans" font-size="8.8" text-anchor="start" font-weight="bold" font-style="normal" textLength="17.80" lengthAdjust="spacingAndGlyphs">INB+</text>
<text x="363.05" y="688.77" fill="#e06c75" font-family="Liberation Sans" font-size="8.0" text-anchor="middle" font-weight="bold" font-style="normal">5</text>
<line x1="357.50" y1="700.50" x2="367.50" y2="700.50" stroke="#e06c75" stroke-width="1.0"/>
<text x="369.90" y="703.23" fill="#98c379" font-family="Liberation Sans" font-size="8.8" text-anchor="start" font-weight="bold" font-style="normal" textLength="17.80" lengthAdjust="spacingAndGlyphs">INB-</text>
<text x="363.05" y="698.55" fill="#e06c75" font-family="Liberation Sans" font-size="8.0" text-anchor="middle" font-weight="bold" font-style="normal">6</text>
<line x1="357.50" y1="709.50" x2="367.50" y2="709.50" stroke="#e06c75" stroke-width="1.0"/>
<text x="369.90" y="713.01" fill="#98c379" font-family="Liberation Sans" font-size="8.8" text-anchor="start" font-weight="bold" font-style="normal" textLength="17.80" lengthAdjust="spacingAndGlyphs">OUTB</text>
<text x="363.05" y="708.33" fill="#e06c75" font-family="Liberation Sans" font-size="8.0" text-anchor="middle" font-weight="bold" font-style="normal">7</text>
<line x1="435.50" y1="651.50" x2="445.50" y2="651.50" stroke="#e06c75" stroke-width="1.0"/>
<text x="432.90" y="654.33" fill="#98c379" font-family="Liberation Sans" font-size="8.8" text-anchor="end" font-weight="bold" font-style="normal" textLength="17.80" lengthAdjust="spacingAndGlyphs">OUTD</text>
<text x="440.30" y="649.65" fill="#e06c75" font-family="Liberation Sans" font-size="8.0" text-anchor="middle" font-weight="bold" font-style="normal">14</text>
<line x1="435.50" y1="661.50" x2="445.50" y2="661.50" stroke="#e06c75" stroke-width="1.0"/>
<text x="432.90" y="664.11" fill="#98c379" font-family="Liberation Sans" font-size="8.8" text-anchor="end" font-weight="bold" font-style="normal" textLength="17.80" lengthAdjust="spacingAndGlyphs">IND-</text>
<text x="440.30" y="659.43" fill="#e06c75" font-family="Liberation Sans" font-size="8.0" text-anchor="middle" font-weight="bold" font-style="normal">13</text>
<line x1="435.50" y1="670.50" x2="445.50" y2="670.50" stroke="#e06c75" stroke-width="1.0"/>
<text x="432.90" y="673.89" fill="#98c379" font-family="Liberation Sans" font-size="8.8" text-anchor="end" font-weight="bold" font-style="normal" textLength="17.80" lengthAdjust="spacingAndGlyphs">IND+</text>
<text x="440.30" y="669.21" fill="#e06c75" font-family="Liberation Sans" font-size="8.0" text-anchor="middle" font-weight="bold" font-style="normal">12</text>
<line x1="435.50" y1="680.50" x2="445.50" y2="680.50" stroke="#e06c75" stroke-width="1.0"/>
<text x="432.90" y="683.67" fill="#98c379" font-family="Liberation Sans" font-size="8.8" text-anchor="end" font-weight="bold" font-style="normal" textLength="13.35" lengthAdjust="spacingAndGlyphs">VSS</text>
<text x="440.30" y="678.99" fill="#e06c75" font-family="Liberation Sans" font-size="8.0" text-anchor="middle" font-weight="bold" font-style="normal">11</text>
<line x1="435.50" y1="690.50" x2="445.50" y2="690.50" stroke="#e06c75" stroke-width="1.0"/>
<text x="432.90" y="693.45" fill="#98c379" font-family="Liberation Sans" font-size="8.8" text-anchor="end" font-weight="bold" font-style="normal" textLength="17.80" lengthAdjust="spacingAndGlyphs">INC+</text>
<text x="440.30" y="688.77" fill="#e06c75" font-family="Liberation Sans" font-size="8.0" text-anchor="middle" font-weight="bold" font-style="normal">10</text>
<line x1="435.50" y1="700.50" x2="445.50" y2="700.50" stroke="#e06c75" stroke-width="1.0"/>
<text x="432.90" y="703.23" fill="#98c379" font-family="Liberation Sans" font-size="8.8" text-anchor="end" font-weight="bold" font-style="normal" textLength="17.80" lengthAdjust="spacingAndGlyphs">INC-</text>
<text x="440.30" y="698.55" fill="#e06c75" font-family="Liberation Sans" font-size="8.0" text-anchor="middle" font-weight="bold" font-style="normal">9</text>
<line x1="435.50" y1="709.50" x2="445.50" y2="709.50" stroke="#e06c75" stroke-width="1.0"/>
<text x="432.90" y="713.01" fill="#98c379" font-family="Liberation Sans" font-size="8.8" text-anchor="end" font-weight="bold" font-style="normal" textLength="17.80" lengthAdjust="spacingAndGlyphs">OUTC</text>
<text x="440.30" y="708.33" fill="#e06c75" font-family="Liberation Sans" font-size="8.0" text-anchor="middle" font-weight="bold" font-style="normal">8</text>
<circle cx="372.10" cy="646.00" r="0.9" fill="#e06c75"/>
<polygon points="316.50,641.50 320.50,637.50 347.50,637.50 347.50,646.50 320.50,646.50 316.50,641.50" stroke="#e06c75" stroke-width="1.0" fill="none" stroke-linejoin="miter"/>
<text x="323.00" y="644.82" fill="#e06c75" font-family="Liberation Sans" font-size="8.2" text-anchor="start" font-weight="bold" font-style="normal" textLength="22.20" lengthAdjust="spacingAndGlyphs">LED<tspan dy="-0.5">_</tspan><tspan dy="0.5">1</tspan></text>
<polyline points="347.50,641.50 357.50,641.50 357.50,651.50" stroke="#98c379" stroke-width="1.0" fill="none" stroke-linejoin="miter"/>
<polygon points="342.50,655.50 338.50,651.50 311.50,651.50 311.50,660.50 338.50,660.50 342.50,655.50" stroke="#e06c75" stroke-width="1.0" fill="none" stroke-linejoin="miter"/>
<text x="314.70" y="659.02" fill="#e06c75" font-family="Liberation Sans" font-size="8.2" text-anchor="start" font-weight="bold" font-style="normal" textLength="21.60" lengthAdjust="spacingAndGlyphs">AUDIO</text>
<polyline points="342.50,655.50 352.50,655.50 352.50,661.50 357.50,661.50" stroke="#98c379" stroke-width="1.0" fill="none" stroke-linejoin="miter"/>
<polygon points="342.50,670.50 338.50,666.50 311.50,666.50 311.50,675.50 338.50,675.50 342.50,670.50" stroke="#e06c75" stroke-width="1.0" fill="none" stroke-linejoin="miter"/>
<text x="314.70" y="673.98" fill="#e06c75" font-family="Liberation Sans" font-size="8.2" text-anchor="start" font-weight="bold" font-style="normal" textLength="21.60" lengthAdjust="spacingAndGlyphs">REF<tspan dy="-0.5">_</tspan><tspan dy="0.5">1</tspan></text>
<polyline points="342.50,670.50 357.50,670.50" stroke="#98c379" stroke-width="1.0" fill="none" stroke-linejoin="miter"/>
<polyline points="357.50,680.50 308.50,680.50 308.50,636.50" stroke="#98c379" stroke-width="1.0" fill="none" stroke-linejoin="miter"/>
<line x1="308.50" y1="636.50" x2="308.50" y2="627.50" stroke="#e06c75" stroke-width="1.0"/>
<polyline points="305.50,631.50 308.50,627.50 311.50,631.50" stroke="#e06c75" stroke-width="1.0" fill="none" stroke-linejoin="miter"/>
<text x="308.30" y="624.24" fill="#56b6c2" font-family="Liberation Sans" font-size="8.2" text-anchor="middle" font-weight="bold" font-style="normal" textLength="14.00" lengthAdjust="spacingAndGlyphs">+5V</text>
<polygon points="342.50,690.50 338.50,685.50 311.50,685.50 311.50,694.50 338.50,694.50 342.50,690.50" stroke="#e06c75" stroke-width="1.0" fill="none" stroke-linejoin="miter"/>
<text x="314.70" y="693.54" fill="#e06c75" font-family="Liberation Sans" font-size="8.2" text-anchor="start" font-weight="bold" font-style="normal" textLength="21.60" lengthAdjust="spacingAndGlyphs">REF<tspan dy="-0.5">_</tspan><tspan dy="0.5">2</tspan></text>
<polyline points="342.50,690.50 357.50,690.50" stroke="#98c379" stroke-width="1.0" fill="none" stroke-linejoin="miter"/>
<polygon points="342.50,704.50 338.50,700.50 311.50,700.50 311.50,709.50 338.50,709.50 342.50,704.50" stroke="#e06c75" stroke-width="1.0" fill="none" stroke-linejoin="miter"/>
<text x="314.70" y="707.82" fill="#e06c75" font-family="Liberation Sans" font-size="8.2" text-anchor="start" font-weight="bold" font-style="normal" textLength="21.60" lengthAdjust="spacingAndGlyphs">AUDIO</text>
<polyline points="342.50,704.50 352.50,704.50 352.50,700.50 357.50,700.50" stroke="#98c379" stroke-width="1.0" fill="none" stroke-linejoin="miter"/>
<polygon points="316.50,719.50 320.50,715.50 347.50,715.50 347.50,724.50 320.50,724.50 316.50,719.50" stroke="#e06c75" stroke-width="1.0" fill="none" stroke-linejoin="miter"/>
<text x="323.00" y="722.72" fill="#e06c75" font-family="Liberation Sans" font-size="8.2" text-anchor="start" font-weight="bold" font-style="normal" textLength="22.20" lengthAdjust="spacingAndGlyphs">LED<tspan dy="-0.5">_</tspan><tspan dy="0.5">2</tspan></text>
<polyline points="347.50,719.50 357.50,719.50 357.50,709.50" stroke="#98c379" stroke-width="1.0" fill="none" stroke-linejoin="miter"/>
<polygon points="485.50,641.50 482.50,637.50 455.50,637.50 455.50,646.50 482.50,646.50 485.50,641.50" stroke="#e06c75" stroke-width="1.0" fill="none" stroke-linejoin="miter"/>
<text x="457.80" y="645.02" fill="#e06c75" font-family="Liberation Sans" font-size="8.2" text-anchor="start" font-weight="bold" font-style="normal" textLength="21.60" lengthAdjust="spacingAndGlyphs">LED<tspan dy="-0.5">_</tspan><tspan dy="0.5">4</tspan></text>
<polyline points="445.50,651.50 445.50,651.50 445.50,641.50 455.50,641.50" stroke="#98c379" stroke-width="1.0" fill="none" stroke-linejoin="miter"/>
<polygon points="460.50,655.50 463.50,651.50 490.50,651.50 490.50,660.50 463.50,660.50 460.50,655.50" stroke="#e06c75" stroke-width="1.0" fill="none" stroke-linejoin="miter"/>
<text x="466.50" y="659.02" fill="#e06c75" font-family="Liberation Sans" font-size="8.2" text-anchor="start" font-weight="bold" font-style="normal" textLength="21.20" lengthAdjust="spacingAndGlyphs">AUDIO</text>
<polyline points="445.50,661.50 450.50,661.50 450.50,655.50 460.50,655.50" stroke="#98c379" stroke-width="1.0" fill="none" stroke-linejoin="miter"/>
<polygon points="460.50,670.50 463.50,666.50 490.50,666.50 490.50,675.50 463.50,675.50 460.50,670.50" stroke="#e06c75" stroke-width="1.0" fill="none" stroke-linejoin="miter"/>
<text x="466.50" y="673.98" fill="#e06c75" font-family="Liberation Sans" font-size="8.2" text-anchor="start" font-weight="bold" font-style="normal" textLength="21.20" lengthAdjust="spacingAndGlyphs">REF<tspan dy="-0.5">_</tspan><tspan dy="0.5">4</tspan></text>
<polyline points="445.50,670.50 460.50,670.50" stroke="#98c379" stroke-width="1.0" fill="none" stroke-linejoin="miter"/>
<polyline points="445.50,680.50 494.50,680.50 494.50,719.50" stroke="#98c379" stroke-width="1.0" fill="none" stroke-linejoin="miter"/>
<line x1="494.50" y1="719.50" x2="494.50" y2="724.50" stroke="#e06c75" stroke-width="1.0"/>
<polyline points="494.50,724.50 499.50,724.50 494.50,728.50 489.50,724.50 494.50,724.50" stroke="#e06c75" stroke-width="1.0" fill="none" stroke-linejoin="miter"/>
<text x="494.30" y="737.02" fill="#56b6c2" font-family="Liberation Sans" font-size="8.2" text-anchor="middle" font-weight="bold" font-style="normal" textLength="14.20" lengthAdjust="spacingAndGlyphs">GND</text>
<polygon points="460.50,690.50 463.50,685.50 490.50,685.50 490.50,694.50 463.50,694.50 460.50,690.50" stroke="#e06c75" stroke-width="1.0" fill="none" stroke-linejoin="miter"/>
<text x="466.50" y="693.54" fill="#e06c75" font-family="Liberation Sans" font-size="8.2" text-anchor="start" font-weight="bold" font-style="normal" textLength="21.20" lengthAdjust="spacingAndGlyphs">REF<tspan dy="-0.5">_</tspan><tspan dy="0.5">3</tspan></text>
<polyline points="445.50,690.50 460.50,690.50" stroke="#98c379" stroke-width="1.0" fill="none" stroke-linejoin="miter"/>
<polygon points="460.50,704.50 463.50,700.50 490.50,700.50 490.50,709.50 463.50,709.50 460.50,704.50" stroke="#e06c75" stroke-width="1.0" fill="none" stroke-linejoin="miter"/>
<text x="466.50" y="707.82" fill="#e06c75" font-family="Liberation Sans" font-size="8.2" text-anchor="start" font-weight="bold" font-style="normal" textLength="21.20" lengthAdjust="spacingAndGlyphs">AUDIO</text>
<polyline points="445.50,700.50 450.50,700.50 450.50,704.50 460.50,704.50" stroke="#98c379" stroke-width="1.0" fill="none" stroke-linejoin="miter"/>
<polygon points="485.50,719.50 482.50,715.50 455.50,715.50 455.50,724.50 482.50,724.50 485.50,719.50" stroke="#e06c75" stroke-width="1.0" fill="none" stroke-linejoin="miter"/>
<text x="457.80" y="722.72" fill="#e06c75" font-family="Liberation Sans" font-size="8.2" text-anchor="start" font-weight="bold" font-style="normal" textLength="21.60" lengthAdjust="spacingAndGlyphs">LED<tspan dy="-0.5">_</tspan><tspan dy="0.5">3</tspan></text>
<polyline points="445.50,709.50 445.50,709.50 445.50,719.50 455.50,719.50" stroke="#98c379" stroke-width="1.0" fill="none" stroke-linejoin="miter"/>
<text x="401.60" y="630.32" fill="#56b6c2" font-family="Liberation Sans" font-size="8.2" text-anchor="middle" font-weight="bold" font-style="normal" textLength="9.00" lengthAdjust="spacingAndGlyphs">U1</text>
<text x="401.60" y="638.72" fill="#56b6c2" font-family="Liberation Sans" font-size="8.2" text-anchor="middle" font-weight="bold" font-style="normal" textLength="38.00" lengthAdjust="spacingAndGlyphs">COS3245R</text>
</svg>
</body></html>
